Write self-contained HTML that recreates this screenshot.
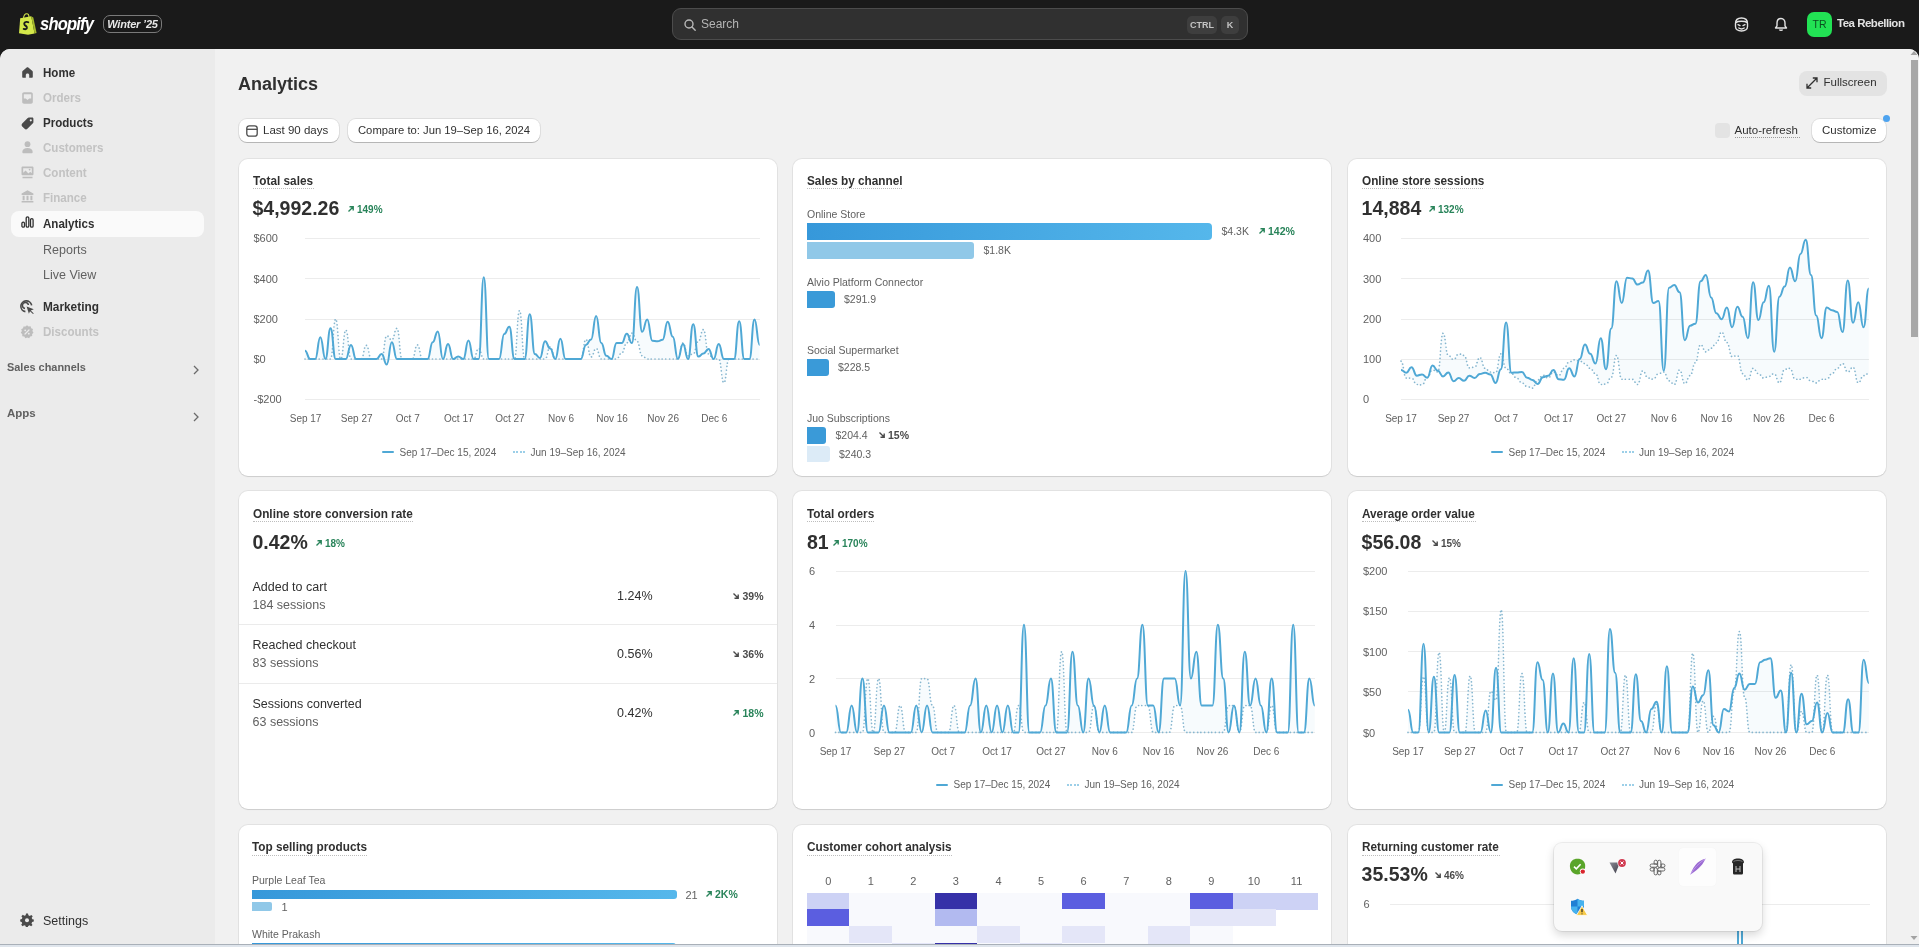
<!DOCTYPE html>
<html><head><meta charset="utf-8">
<style>
*{box-sizing:border-box;margin:0;padding:0}
html,body{width:1919px;height:947px;overflow:hidden;background:#1a1a1a;font-family:"Liberation Sans",sans-serif;color:#303030}
.abs{position:absolute}
#top{will-change:transform;position:absolute;left:0;top:0;width:1919px;height:49px;background:#1a1a1a}
#frame{will-change:transform;position:absolute;left:0;top:49px;width:1919px;height:895px;background:#f1f1f1;border-radius:10px 10px 0 0;overflow:hidden}
#side{position:absolute;left:0;top:0;width:215px;height:895px;background:#ebebeb}
#taskbar{position:absolute;left:0;top:944px;width:1919px;height:3px;background:#dfe5ec;border-top:1px solid #a9b0b8}
.nav{position:absolute;left:43px;font-size:13px;font-weight:bold;color:#303030;line-height:16px;white-space:nowrap;transform:scaleX(.89);transform-origin:0 0}
.nav.dis{color:#c2c2c2}
.nav.sub{font-weight:normal;color:#616161;transform:none}
.nico{position:absolute;left:20px;width:14px;height:14px}
.card{position:absolute;background:#fff;border-radius:9px;box-shadow:0 0 0 1px rgba(0,0,0,0.06),0 1px 1px rgba(0,0,0,0.10)}
.ctitle{position:absolute;left:14px;top:15px;font-size:13px;font-weight:bold;color:#303030;line-height:16px;white-space:nowrap;border-bottom:1px dotted #c9c9c9;padding-bottom:1px}
.big{position:absolute;left:14px;font-size:19px;font-weight:bold;color:#303030;line-height:22px;white-space:nowrap}
.chg{font-size:11px;font-weight:bold;color:#29845a;margin-left:6px;vertical-align:2px}
.chg.dn{color:#4a4a4a}
.t{position:absolute;white-space:nowrap;line-height:14px}
.btn{position:absolute;background:#fff;border-radius:8px;box-shadow:0 0 0 1px rgba(0,0,0,0.08),0 1px 0 rgba(0,0,0,0.18);font-size:12px;color:#303030;line-height:24px;white-space:nowrap}
svg{position:absolute;overflow:visible}
#content{will-change:transform}
</style></head><body>
<div id="top">
  <!-- shopify bag -->
  <svg style="left:18px;top:13px" width="19" height="22" viewBox="0 0 19 22">
    <path d="M2.2 5.2 L13.2 3.3 L16.6 20.4 L10 21.8 L1 20.2 Z" fill="#d4e84a"/>
    <path d="M13.2 3.3 L15.3 4.4 L18.6 19.9 L16.6 20.4 Z" fill="#a3b82a"/>
    <path d="M5.5 6 C5.6 2.2 7.3 0.8 8.8 0.8 C10.4 0.8 11 2.6 11 4.6" fill="none" stroke="#d4e84a" stroke-width="1.1"/>
    <path d="M10.3 9.3 C9.7 8.9 8.9 8.8 8.2 8.9 C6.5 9.1 5.7 10.6 6.6 11.8 C7.4 12.8 9.1 13.2 8.9 14.9 C8.7 16.3 7.1 16.6 5.7 15.9" fill="none" stroke="#1a1a1a" stroke-width="1.9" stroke-linecap="round"/>
  </svg>
  <div class="abs" style="left:40px;top:12px;font-size:18px;font-weight:bold;font-style:italic;color:#fff;letter-spacing:-0.9px;line-height:24px;transform:scaleX(.92);transform-origin:0 0">shopify</div>
  <div class="abs" style="left:103px;top:15px;width:59px;height:18px;border:1px solid #7a7a7a;border-radius:7px;font-size:11px;font-weight:bold;font-style:italic;color:#e8e8e8;line-height:16px;text-align:center;letter-spacing:-0.2px">Winter ’25</div>
  <!-- search -->
  <div class="abs" style="left:672px;top:8px;width:576px;height:32px;background:#303030;border:1px solid #4c4c4c;border-radius:9px">
    <svg style="left:11px;top:10px" width="12" height="12" viewBox="0 0 12 12"><circle cx="5" cy="5" r="4" fill="none" stroke="#b8b8b8" stroke-width="1.4"/><path d="M8 8 L11.2 11.2" stroke="#b8b8b8" stroke-width="1.4" stroke-linecap="round"/></svg>
    <div class="abs" style="left:28px;top:7px;font-size:12px;color:#b5b5b5;line-height:16px">Search</div>
    <div class="abs" style="left:514px;top:7px;width:30px;height:18px;background:#3e3e3e;border-radius:5px;font-size:9px;font-weight:bold;color:#c4c4c4;line-height:18px;text-align:center">CTRL</div>
    <div class="abs" style="left:548px;top:7px;width:18px;height:18px;background:#3e3e3e;border-radius:5px;font-size:9px;font-weight:bold;color:#c4c4c4;line-height:18px;text-align:center">K</div>
  </div>
  <!-- right icons -->
  <svg style="left:1734px;top:17px" width="15" height="15" viewBox="0 0 15 15">
    <path d="M7.5 1 C11.2 1 13.5 2.8 13.5 6.5 V9.5 C13.5 12.3 11.3 14 7.5 14 C3.7 14 1.5 12.3 1.5 9.5 V6.5 C1.5 2.8 3.8 1 7.5 1 Z" fill="none" stroke="#e3e3e3" stroke-width="1.4"/>
    <path d="M1.8 5.5 C4 3.8 11 3.8 13.2 5.5" fill="none" stroke="#e3e3e3" stroke-width="1.6"/>
    <path d="M4 7.6 L6 8.6 M11 7.6 L9 8.6 M4.8 11 C6.2 12 8.8 12 10.2 11" fill="none" stroke="#e3e3e3" stroke-width="1.3" stroke-linecap="round"/>
  </svg>
  <svg style="left:1774px;top:17px" width="14" height="15" viewBox="0 0 14 15">
    <path d="M7 1.5 C4.3 1.5 3 3.6 3 6 V8.8 L1.5 11 H12.5 L11 8.8 V6 C11 3.6 9.7 1.5 7 1.5 Z" fill="none" stroke="#e3e3e3" stroke-width="1.4" stroke-linejoin="round"/>
    <path d="M5.5 12.5 C5.8 13.6 8.2 13.6 8.5 12.5" fill="none" stroke="#e3e3e3" stroke-width="1.4"/>
  </svg>
  <div class="abs" style="left:1807px;top:12px;width:25px;height:25px;background:#22e254;border-radius:7px;font-size:10.5px;color:#0b4f1f;line-height:25px;text-align:center">TR</div>
  <div class="abs" style="left:1837px;top:16px;font-size:11.5px;font-weight:bold;color:#e3e3e3;line-height:14px;letter-spacing:-0.5px">Tea Rebellion</div>
</div>
<div id="frame"><div id="side">
  <div class="abs" style="left:11px;top:162px;width:193px;height:26px;background:#fafafa;border-radius:8px"></div>
  <!-- icons -->
  <svg style="left:22px;top:18px" width="11" height="11" viewBox="0 0 11 11"><path d="M5.5 0.2 C5.8 0.2 6.1 0.3 6.3 0.5 L10.4 4 C10.7 4.3 10.8 4.7 10.8 5.1 V9.8 C10.8 10.4 10.4 10.8 9.8 10.8 H7.2 V8 C7.2 7.1 6.5 6.4 5.5 6.4 C4.5 6.4 3.8 7.1 3.8 8 V10.8 H1.2 C0.6 10.8 0.2 10.4 0.2 9.8 V5.1 C0.2 4.7 0.3 4.3 0.6 4 L4.7 0.5 C4.9 0.3 5.2 0.2 5.5 0.2 Z" fill="#4a4a4a"/></svg>
  <svg style="left:22px;top:43px" width="11" height="12" viewBox="0 0 11 12"><path d="M2 0.3 H9 C10 0.3 10.8 1.1 10.8 2.1 V10 C10.8 11 10 11.7 9 11.7 H2 C1 11.7 0.2 11 0.2 10 V2.1 C0.2 1.1 1 0.3 2 0.3 Z M1.8 2.2 V6.6 H3.8 L5.5 8 L7.2 6.6 H9.2 V2.2 Z" fill="#bdbdbd" fill-rule="evenodd"/></svg>
  <svg style="left:21px;top:68px" width="13" height="13" viewBox="0 0 13 13"><path d="M7.8 0.6 H11.2 C11.9 0.6 12.4 1.1 12.4 1.8 V5.2 C12.4 5.6 12.2 6 11.9 6.3 L6.4 11.8 C5.6 12.6 4.4 12.6 3.6 11.8 L1.2 9.4 C0.4 8.6 0.4 7.4 1.2 6.6 L6.7 1.1 C7 0.8 7.4 0.6 7.8 0.6 Z M9.8 2.2 A1.1 1.1 0 1 0 9.8 4.4 A1.1 1.1 0 1 0 9.8 2.2 Z" fill="#4a4a4a" fill-rule="evenodd"/></svg>
  <svg style="left:22px;top:92px" width="11" height="13" viewBox="0 0 11 13"><circle cx="5.5" cy="3.2" r="2.9" fill="#bdbdbd"/><path d="M0.3 11 C0.3 8.4 2.6 7 5.5 7 C8.4 7 10.7 8.4 10.7 11 C10.7 11.8 10.2 12.3 9.4 12.3 H1.6 C0.8 12.3 0.3 11.8 0.3 11 Z" fill="#bdbdbd"/></svg>
  <svg style="left:21px;top:117px" width="13" height="13" viewBox="0 0 13 13"><path d="M1.8 0.5 H11.2 C12 0.5 12.5 1 12.5 1.8 V8 C12.5 8.8 12 9.3 11.2 9.3 H1.8 C1 9.3 0.5 8.8 0.5 8 V1.8 C0.5 1 1 0.5 1.8 0.5 Z M2.2 2.2 V6.8 L4.6 4.6 L7.4 7.4 L9.2 5.8 L10.8 7.2 V2.2 Z" fill="#bdbdbd" fill-rule="evenodd"/><circle cx="8.6" cy="3.6" r="0.9" fill="#bdbdbd"/><path d="M1.5 11.5 H11.5" stroke="#bdbdbd" stroke-width="1.3"/></svg>
  <svg style="left:21px;top:141px" width="13" height="13" viewBox="0 0 13 13"><path d="M6.5 0.3 L12.4 3.5 V4.9 H0.6 V3.5 Z M1.6 5.8 H3.6 V10.2 H1.6 Z M5.5 5.8 H7.5 V10.2 H5.5 Z M9.4 5.8 H11.4 V10.2 H9.4 Z M0.6 11 H12.4 V12.6 H0.6 Z" fill="#bdbdbd"/></svg>
  <svg style="left:21px;top:167px" width="13" height="12" viewBox="0 0 13 12"><rect x="0.9" y="6.2" width="2.6" height="5" rx="1.3" fill="none" stroke="#303030" stroke-width="1.3"/><rect x="5.2" y="0.8" width="2.6" height="10.4" rx="1.3" fill="none" stroke="#303030" stroke-width="1.3"/><rect x="9.5" y="2.6" width="2.6" height="8.6" rx="1.3" fill="none" stroke="#303030" stroke-width="1.3"/></svg>
  <svg style="left:20px;top:251px" width="15" height="14" viewBox="0 0 15 14"><path d="M11.6 5.4 A5.4 5.4 0 1 0 5.4 11.6" fill="none" stroke="#4a4a4a" stroke-width="1.6"/><path d="M8.4 5 A3 3 0 1 0 5 8.4" fill="none" stroke="#4a4a4a" stroke-width="1.5"/><path d="M6.6 6.6 L13.8 9.3 L10.8 10.5 L13.8 13.5 L13 14 L10 11.3 L8.9 13.8 Z" fill="#4a4a4a"/></svg>
  <svg style="left:20px;top:276px" width="14" height="14" viewBox="0 0 14 14"><path d="M7 0.3 L8.6 1.6 L10.6 1.3 L11.2 3.2 L13 4.1 L12.4 6 L13.5 7.7 L12.1 9.1 L12.2 11.1 L10.2 11.4 L9.2 13.2 L7.3 12.5 L5.4 13.3 L4.3 11.5 L2.3 11.2 L2.3 9.2 L0.8 7.8 L1.9 6.1 L1.2 4.2 L3 3.3 L3.5 1.4 L5.5 1.6 Z" fill="#bdbdbd"/><path d="M5 9 L9 5" stroke="#ebebeb" stroke-width="1.2" stroke-linecap="round"/><circle cx="5.2" cy="5.3" r="0.9" fill="#ebebeb"/><circle cx="8.8" cy="8.7" r="0.9" fill="#ebebeb"/></svg>
  <div class="nav" style="top:16px">Home</div>
  <div class="nav dis" style="top:41px">Orders</div>
  <div class="nav" style="top:66px">Products</div>
  <div class="nav dis" style="top:91px">Customers</div>
  <div class="nav dis" style="top:116px">Content</div>
  <div class="nav dis" style="top:141px">Finance</div>
  <div class="nav" style="top:167px">Analytics</div>
  <div class="nav sub" style="top:192.5px;font-size:12.5px">Reports</div>
  <div class="nav sub" style="top:217.5px;font-size:12.5px">Live View</div>
  <div class="nav" style="top:250px;transform:scaleX(.91)">Marketing</div>
  <div class="nav dis" style="top:275px">Discounts</div>
  <div class="abs" style="left:7px;top:311px;font-size:11.5px;font-weight:bold;color:#616161;line-height:14px;transform:scaleX(.95);transform-origin:0 0">Sales channels</div>
  <svg style="left:192px;top:316px" width="8" height="10" viewBox="0 0 8 10"><path d="M2 1 L6 5 L2 9" fill="none" stroke="#6b6b6b" stroke-width="1.3"/></svg>
  <div class="abs" style="left:7px;top:357px;font-size:11.5px;font-weight:bold;color:#616161;line-height:14px">Apps</div>
  <svg style="left:192px;top:363px" width="8" height="10" viewBox="0 0 8 10"><path d="M2 1 L6 5 L2 9" fill="none" stroke="#6b6b6b" stroke-width="1.3"/></svg>
  <svg style="left:20px;top:864px" width="14" height="14" viewBox="0 0 14 14"><path d="M6 0.5 H8 L8.4 2.3 L9.8 2.9 L11.3 1.9 L12.7 3.3 L11.7 4.8 L12.3 6.2 L13.8 6.6 V8.6 L12.1 9 L11.5 10.4 L12.5 11.9 L11.1 13.3 L9.6 12.3 L8.2 12.9 L7.8 14 H5.8 L5.5 12.8 L4.1 12.2 L2.6 13.2 L1.2 11.8 L2.2 10.3 L1.6 8.9 L0.2 8.5 V6.5 L1.8 6.1 L2.4 4.7 L1.4 3.2 L2.8 1.8 L4.3 2.8 L5.7 2.2 Z" fill="#4a4a4a"/><circle cx="7" cy="7.3" r="2" fill="#ebebeb"/></svg>
  <div class="nav" style="top:864px;font-weight:normal;color:#303030;font-size:12.5px;transform:none">Settings</div>
</div>
</div>
<div id="content" style="position:absolute;left:0;top:0;width:1919px;height:944px;overflow:hidden">
<div class="t" style="left:238px;top:72.76px;font-size:18px;line-height:22px;font-weight:bold;color:#303030;">Analytics</div>
<div class="abs" style="left:1799px;top:71px;width:88px;height:25px;background:#e3e3e3;border-radius:8px"></div>
<svg style="left:1806px;top:77px" width="12" height="12" viewBox="0 0 12 12"><path d="M1 11 L11 1 M6.8 1 H11 V5.2 M1 6.8 V11 H5.2" fill="none" stroke="#303030" stroke-width="1.3"/></svg>
<div class="t" style="left:1823.5px;top:75.22px;font-size:11.5px;line-height:14px;font-weight:normal;color:#303030;">Fullscreen</div>
<div class="btn" style="left:239px;top:119px;width:100px;height:23px"></div>
<svg style="left:246px;top:125px" width="12" height="12" viewBox="0 0 12 12"><rect x="0.8" y="0.8" width="10.4" height="10.4" rx="2.5" fill="none" stroke="#4a4a4a" stroke-width="1.3"/><path d="M0.8 4.3 H11.2" stroke="#4a4a4a" stroke-width="1.3"/></svg>
<div class="t" style="left:263px;top:123.02px;font-size:11.5px;line-height:14px;font-weight:normal;color:#303030;">Last 90 days</div>
<div class="btn" style="left:348px;top:119px;width:192px;height:23px"></div>
<div class="t" style="left:358px;top:123.1px;font-size:11.25px;line-height:14px;font-weight:normal;color:#303030;">Compare to: Jun 19–Sep 16, 2024</div>
<div class="abs" style="left:1715px;top:123px;width:15px;height:15px;background:#e3e3e3;border-radius:4px"></div>
<div class="t" style="left:1734.5px;top:123.32px;font-size:11.5px;line-height:14px;font-weight:normal;color:#303030;">Auto-refresh</div>
<div class="abs" style="left:1735px;top:137px;width:65px;height:0;border-top:1px dotted #9a9a9a"></div>
<div class="btn" style="left:1812px;top:119px;width:74px;height:23px"></div>
<div class="t" style="left:1822px;top:123.32px;font-size:11.5px;line-height:14px;font-weight:normal;color:#303030;">Customize</div>
<div class="abs" style="left:1883px;top:115px;width:7px;height:7px;background:#4da3ef;border-radius:50%"></div>
<div class="card" style="left:239px;top:159px;width:538px;height:317px"></div>
<div class="card" style="left:793px;top:159px;width:538px;height:317px"></div>
<div class="card" style="left:1348px;top:159px;width:538px;height:317px"></div>
<div class="card" style="left:239px;top:491px;width:538px;height:318px"></div>
<div class="card" style="left:793px;top:491px;width:538px;height:318px"></div>
<div class="card" style="left:1348px;top:491px;width:538px;height:318px"></div>
<div class="card" style="left:239px;top:825px;width:538px;height:200px"></div>
<div class="card" style="left:793px;top:825px;width:538px;height:200px"></div>
<div class="card" style="left:1348px;top:825px;width:538px;height:200px"></div>
<div class="t" style="left:252.5px;top:172.5px;font-size:13px;line-height:16px;font-weight:bold;color:#303030;transform:scaleX(0.906);transform-origin:0 0;">Total sales</div>
<div class="abs" style="left:252.5px;top:188px;width:61px;height:0;border-top:1px dotted #bdbdbd"></div>
<div class="t" style="left:252.5px;top:195.84px;font-size:19.5px;line-height:24px;font-weight:bold;color:#303030;">$4,992.26</div>
<div class="t" style="left:347px;top:203.53px;font-size:10px;line-height:12px;font-weight:bold;color:#29845a;"><svg width="8" height="8" viewBox="0 0 8 8" style="position:relative;display:inline-block;vertical-align:0px;margin-right:2px"><path d="M1.5 6.5 L6 2 M2.5 1.8 H6.2 V5.5" fill="none" stroke="#29845a" stroke-width="1.4"/></svg>149%</div>
<div class="t" style="left:253.5px;top:231.39px;font-size:11px;line-height:14px;font-weight:normal;color:#616161;">$600</div>
<div class="t" style="left:253.5px;top:271.79px;font-size:11px;line-height:14px;font-weight:normal;color:#616161;">$400</div>
<div class="t" style="left:253.5px;top:312.19px;font-size:11px;line-height:14px;font-weight:normal;color:#616161;">$200</div>
<div class="t" style="left:253.5px;top:352.19px;font-size:11px;line-height:14px;font-weight:normal;color:#616161;">$0</div>
<div class="t" style="left:253.5px;top:392.19px;font-size:11px;line-height:14px;font-weight:normal;color:#616161;">-$200</div>
<div class="abs" style="left:305px;top:237.7px;width:455px;height:1px;background:#ececec"></div>
<div class="abs" style="left:305px;top:278.1px;width:455px;height:1px;background:#ececec"></div>
<div class="abs" style="left:305px;top:318.5px;width:455px;height:1px;background:#ececec"></div>
<div class="abs" style="left:305px;top:358.5px;width:455px;height:1px;background:#ececec"></div>
<div class="abs" style="left:305px;top:398.5px;width:455px;height:1px;background:#ececec"></div>
<svg style="left:0;top:0" width="1919" height="947"><path d="M305 350.74C307.55 350.74 307.55 359 310.11 359C312.66 359 312.66 359 315.22 359C317.77 359 317.77 337.24 320.32 337.24C322.88 337.24 322.88 359 325.43 359C327.99 359 327.99 328.37 330.54 328.37C333.09 328.37 333.09 359 335.65 359C338.2 359 338.2 359 340.76 359C343.31 359 343.31 359 345.86 359C348.42 359 348.42 344.89 350.97 344.89C353.53 344.89 353.53 359 356.08 359C358.63 359 358.63 359 361.19 359C363.74 359 363.74 359 366.3 359C368.85 359 368.85 359 371.4 359C373.96 359 373.96 359 376.51 359C379.07 359 379.07 353.96 381.62 353.96C384.17 353.96 384.17 364.44 386.73 364.44C389.28 364.44 389.28 342.28 391.84 342.28C394.39 342.28 394.39 359 396.94 359C399.5 359 399.5 359 402.05 359C404.61 359 404.61 359 407.16 359C409.71 359 409.71 359 412.27 359C414.82 359 414.82 359 417.38 359C419.93 359 419.93 359 422.48 359C425.04 359 425.04 359 427.59 359C430.15 359 430.15 342.28 432.7 342.28C435.25 342.28 435.25 331.39 437.81 331.39C440.36 331.39 440.36 359 442.92 359C445.47 359 445.47 344.09 448.02 344.09C450.58 344.09 450.58 359 453.13 359C455.69 359 455.69 356.38 458.24 356.38C460.79 356.38 460.79 359 463.35 359C465.9 359 465.9 340.46 468.46 340.46C471.01 340.46 471.01 359 473.56 359C476.12 359 476.12 359 478.67 359C481.23 359 481.23 277.19 483.78 277.19C486.33 277.19 486.33 359 488.89 359C491.44 359 491.44 359 494 359C496.55 359 496.55 359 499.1 359C501.66 359 501.66 334.01 504.21 334.01C506.77 334.01 506.77 326.76 509.32 326.76C511.87 326.76 511.87 359 514.43 359C516.98 359 516.98 359 519.54 359C522.09 359 522.09 359 524.64 359C527.2 359 527.2 314.27 529.75 314.27C532.31 314.27 532.31 353.96 534.86 353.96C537.41 353.96 537.41 357.99 539.97 357.99C542.52 357.99 542.52 341.27 545.08 341.27C547.63 341.27 547.63 348.52 550.18 348.52C552.74 348.52 552.74 359 555.29 359C557.85 359 557.85 338.65 560.4 338.65C562.95 338.65 562.95 359 565.51 359C568.06 359 568.06 359 570.62 359C573.17 359 573.17 359 575.72 359C578.28 359 578.28 359 580.83 359C583.39 359 583.39 344.89 585.94 344.89C588.49 344.89 588.49 339.45 591.05 339.45C593.6 339.45 593.6 316.08 596.16 316.08C598.71 316.08 598.71 343.08 601.26 343.08C603.82 343.08 603.82 355.78 606.37 355.78C608.93 355.78 608.93 359 611.48 359C614.03 359 614.03 343.08 616.59 343.08C619.14 343.08 619.14 343.08 621.7 343.08C624.25 343.08 624.25 333.81 626.8 333.81C629.36 333.81 629.36 343.08 631.91 343.08C634.47 343.08 634.47 287.06 637.02 287.06C639.57 287.06 639.57 331.8 642.13 331.8C644.68 331.8 644.68 319.51 647.24 319.51C649.79 319.51 649.79 340.87 652.34 340.87C654.9 340.87 654.9 341.27 657.45 341.27C660.01 341.27 660.01 339.86 662.56 339.86C665.11 339.86 665.11 321.72 667.67 321.72C670.22 321.72 670.22 336.83 672.78 336.83C675.33 336.83 675.33 359 677.88 359C680.44 359 680.44 344.09 682.99 344.09C685.55 344.09 685.55 359 688.1 359C690.65 359 690.65 324.14 693.21 324.14C695.76 324.14 695.76 356.58 698.32 356.58C700.87 356.58 700.87 353.56 703.42 353.56C705.98 353.56 705.98 348.93 708.53 348.93C711.09 348.93 711.09 359 713.64 359C716.19 359 716.19 344.09 718.75 344.09C721.3 344.09 721.3 359 723.86 359C726.41 359 726.41 359 728.96 359C731.52 359 731.52 359 734.07 359C736.63 359 736.63 321.32 739.18 321.32C741.73 321.32 741.73 359 744.29 359C746.84 359 746.84 359 749.4 359C751.95 359 751.95 319.51 754.5 319.51C757.06 319.51 757.06 344.89 759.61 344.89L759.61 359C757.06 359 757.06 359 754.5 359C751.95 359 751.95 359 749.4 359C746.84 359 746.84 359 744.29 359C741.73 359 741.73 359 739.18 359C736.63 359 736.63 359 734.07 359C731.52 359 731.52 359 728.96 359C726.41 359 726.41 382.78 723.86 382.78C721.3 382.78 721.3 359 718.75 359C716.19 359 716.19 359 713.64 359C711.09 359 711.09 353.96 708.53 353.96C705.98 353.96 705.98 329.58 703.42 329.58C700.87 329.58 700.87 341.27 698.32 341.27C695.76 341.27 695.76 353.96 693.21 353.96C690.65 353.96 690.65 355.78 688.1 355.78C685.55 355.78 685.55 343.08 682.99 343.08C680.44 343.08 680.44 359 677.88 359C675.33 359 675.33 359 672.78 359C670.22 359 670.22 359 667.67 359C665.11 359 665.11 359 662.56 359C660.01 359 660.01 359 657.45 359C654.9 359 654.9 359 652.34 359C649.79 359 649.79 359 647.24 359C644.68 359 644.68 355.78 642.13 355.78C639.57 355.78 639.57 341.27 637.02 341.27C634.47 341.27 634.47 333.21 631.91 333.21C629.36 333.21 629.36 342.88 626.8 342.88C624.25 342.88 624.25 352.95 621.7 352.95C619.14 352.95 619.14 359 616.59 359C614.03 359 614.03 359 611.48 359C608.93 359 608.93 359 606.37 359C603.82 359 603.82 359 601.26 359C598.71 359 598.71 348.52 596.16 348.52C593.6 348.52 593.6 356.99 591.05 356.99C588.49 356.99 588.49 339.45 585.94 339.45C583.39 339.45 583.39 359 580.83 359C578.28 359 578.28 359 575.72 359C573.17 359 573.17 359 570.62 359C568.06 359 568.06 359 565.51 359C562.95 359 562.95 359 560.4 359C557.85 359 557.85 359 555.29 359C552.74 359 552.74 346.91 550.18 346.91C547.63 346.91 547.63 359 545.08 359C542.52 359 542.52 359 539.97 359C537.41 359 537.41 359 534.86 359C532.31 359 532.31 359 529.75 359C527.2 359 527.2 359 524.64 359C522.09 359 522.09 310.64 519.54 310.64C516.98 310.64 516.98 359 514.43 359C511.87 359 511.87 359 509.32 359C506.77 359 506.77 359 504.21 359C501.66 359 501.66 359 499.1 359C496.55 359 496.55 359 494 359C491.44 359 491.44 359 488.89 359C486.33 359 486.33 359 483.78 359C481.23 359 481.23 348.52 478.67 348.52C476.12 348.52 476.12 359 473.56 359C471.01 359 471.01 359 468.46 359C465.9 359 465.9 359 463.35 359C460.79 359 460.79 359 458.24 359C455.69 359 455.69 359 453.13 359C450.58 359 450.58 359 448.02 359C445.47 359 445.47 359 442.92 359C440.36 359 440.36 359 437.81 359C435.25 359 435.25 359 432.7 359C430.15 359 430.15 359 427.59 359C425.04 359 425.04 359 422.48 359C419.93 359 419.93 344.89 417.38 344.89C414.82 344.89 414.82 359 412.27 359C409.71 359 409.71 359 407.16 359C404.61 359 404.61 359 402.05 359C399.5 359 399.5 328.37 396.94 328.37C394.39 328.37 394.39 339.86 391.84 339.86C389.28 339.86 389.28 335.83 386.73 335.83C384.17 335.83 384.17 359 381.62 359C379.07 359 379.07 359 376.51 359C373.96 359 373.96 359 371.4 359C368.85 359 368.85 345.3 366.3 345.3C363.74 345.3 363.74 359 361.19 359C358.63 359 358.63 359 356.08 359C353.53 359 353.53 359 350.97 359C348.42 359 348.42 330.19 345.86 330.19C343.31 330.19 343.31 359 340.76 359C338.2 359 338.2 319.1 335.65 319.1C333.09 319.1 333.09 359 330.54 359C327.99 359 327.99 359 325.43 359C322.88 359 322.88 359 320.32 359C317.77 359 317.77 359 315.22 359C312.66 359 312.66 359 310.11 359C307.55 359 307.55 359 305 359Z" fill="rgba(79,168,213,0.045)" stroke="none"/><path d="M305 359C307.55 359 307.55 359 310.11 359C312.66 359 312.66 359 315.22 359C317.77 359 317.77 359 320.32 359C322.88 359 322.88 359 325.43 359C327.99 359 327.99 359 330.54 359C333.09 359 333.09 319.1 335.65 319.1C338.2 319.1 338.2 359 340.76 359C343.31 359 343.31 330.19 345.86 330.19C348.42 330.19 348.42 359 350.97 359C353.53 359 353.53 359 356.08 359C358.63 359 358.63 359 361.19 359C363.74 359 363.74 345.3 366.3 345.3C368.85 345.3 368.85 359 371.4 359C373.96 359 373.96 359 376.51 359C379.07 359 379.07 359 381.62 359C384.17 359 384.17 335.83 386.73 335.83C389.28 335.83 389.28 339.86 391.84 339.86C394.39 339.86 394.39 328.37 396.94 328.37C399.5 328.37 399.5 359 402.05 359C404.61 359 404.61 359 407.16 359C409.71 359 409.71 359 412.27 359C414.82 359 414.82 344.89 417.38 344.89C419.93 344.89 419.93 359 422.48 359C425.04 359 425.04 359 427.59 359C430.15 359 430.15 359 432.7 359C435.25 359 435.25 359 437.81 359C440.36 359 440.36 359 442.92 359C445.47 359 445.47 359 448.02 359C450.58 359 450.58 359 453.13 359C455.69 359 455.69 359 458.24 359C460.79 359 460.79 359 463.35 359C465.9 359 465.9 359 468.46 359C471.01 359 471.01 359 473.56 359C476.12 359 476.12 348.52 478.67 348.52C481.23 348.52 481.23 359 483.78 359C486.33 359 486.33 359 488.89 359C491.44 359 491.44 359 494 359C496.55 359 496.55 359 499.1 359C501.66 359 501.66 359 504.21 359C506.77 359 506.77 359 509.32 359C511.87 359 511.87 359 514.43 359C516.98 359 516.98 310.64 519.54 310.64C522.09 310.64 522.09 359 524.64 359C527.2 359 527.2 359 529.75 359C532.31 359 532.31 359 534.86 359C537.41 359 537.41 359 539.97 359C542.52 359 542.52 359 545.08 359C547.63 359 547.63 346.91 550.18 346.91C552.74 346.91 552.74 359 555.29 359C557.85 359 557.85 359 560.4 359C562.95 359 562.95 359 565.51 359C568.06 359 568.06 359 570.62 359C573.17 359 573.17 359 575.72 359C578.28 359 578.28 359 580.83 359C583.39 359 583.39 339.45 585.94 339.45C588.49 339.45 588.49 356.99 591.05 356.99C593.6 356.99 593.6 348.52 596.16 348.52C598.71 348.52 598.71 359 601.26 359C603.82 359 603.82 359 606.37 359C608.93 359 608.93 359 611.48 359C614.03 359 614.03 359 616.59 359C619.14 359 619.14 352.95 621.7 352.95C624.25 352.95 624.25 342.88 626.8 342.88C629.36 342.88 629.36 333.21 631.91 333.21C634.47 333.21 634.47 341.27 637.02 341.27C639.57 341.27 639.57 355.78 642.13 355.78C644.68 355.78 644.68 359 647.24 359C649.79 359 649.79 359 652.34 359C654.9 359 654.9 359 657.45 359C660.01 359 660.01 359 662.56 359C665.11 359 665.11 359 667.67 359C670.22 359 670.22 359 672.78 359C675.33 359 675.33 359 677.88 359C680.44 359 680.44 343.08 682.99 343.08C685.55 343.08 685.55 355.78 688.1 355.78C690.65 355.78 690.65 353.96 693.21 353.96C695.76 353.96 695.76 341.27 698.32 341.27C700.87 341.27 700.87 329.58 703.42 329.58C705.98 329.58 705.98 353.96 708.53 353.96C711.09 353.96 711.09 359 713.64 359C716.19 359 716.19 359 718.75 359C721.3 359 721.3 382.78 723.86 382.78C726.41 382.78 726.41 359 728.96 359C731.52 359 731.52 359 734.07 359C736.63 359 736.63 359 739.18 359C741.73 359 741.73 359 744.29 359C746.84 359 746.84 359 749.4 359C751.95 359 751.95 359 754.5 359C757.06 359 757.06 359 759.61 359" fill="none" stroke="#86b6cf" stroke-width="1.7" stroke-dasharray="0.01 3.6" stroke-linecap="round"/><path d="M305 350.74C307.55 350.74 307.55 359 310.11 359C312.66 359 312.66 359 315.22 359C317.77 359 317.77 337.24 320.32 337.24C322.88 337.24 322.88 359 325.43 359C327.99 359 327.99 328.37 330.54 328.37C333.09 328.37 333.09 359 335.65 359C338.2 359 338.2 359 340.76 359C343.31 359 343.31 359 345.86 359C348.42 359 348.42 344.89 350.97 344.89C353.53 344.89 353.53 359 356.08 359C358.63 359 358.63 359 361.19 359C363.74 359 363.74 359 366.3 359C368.85 359 368.85 359 371.4 359C373.96 359 373.96 359 376.51 359C379.07 359 379.07 353.96 381.62 353.96C384.17 353.96 384.17 364.44 386.73 364.44C389.28 364.44 389.28 342.28 391.84 342.28C394.39 342.28 394.39 359 396.94 359C399.5 359 399.5 359 402.05 359C404.61 359 404.61 359 407.16 359C409.71 359 409.71 359 412.27 359C414.82 359 414.82 359 417.38 359C419.93 359 419.93 359 422.48 359C425.04 359 425.04 359 427.59 359C430.15 359 430.15 342.28 432.7 342.28C435.25 342.28 435.25 331.39 437.81 331.39C440.36 331.39 440.36 359 442.92 359C445.47 359 445.47 344.09 448.02 344.09C450.58 344.09 450.58 359 453.13 359C455.69 359 455.69 356.38 458.24 356.38C460.79 356.38 460.79 359 463.35 359C465.9 359 465.9 340.46 468.46 340.46C471.01 340.46 471.01 359 473.56 359C476.12 359 476.12 359 478.67 359C481.23 359 481.23 277.19 483.78 277.19C486.33 277.19 486.33 359 488.89 359C491.44 359 491.44 359 494 359C496.55 359 496.55 359 499.1 359C501.66 359 501.66 334.01 504.21 334.01C506.77 334.01 506.77 326.76 509.32 326.76C511.87 326.76 511.87 359 514.43 359C516.98 359 516.98 359 519.54 359C522.09 359 522.09 359 524.64 359C527.2 359 527.2 314.27 529.75 314.27C532.31 314.27 532.31 353.96 534.86 353.96C537.41 353.96 537.41 357.99 539.97 357.99C542.52 357.99 542.52 341.27 545.08 341.27C547.63 341.27 547.63 348.52 550.18 348.52C552.74 348.52 552.74 359 555.29 359C557.85 359 557.85 338.65 560.4 338.65C562.95 338.65 562.95 359 565.51 359C568.06 359 568.06 359 570.62 359C573.17 359 573.17 359 575.72 359C578.28 359 578.28 359 580.83 359C583.39 359 583.39 344.89 585.94 344.89C588.49 344.89 588.49 339.45 591.05 339.45C593.6 339.45 593.6 316.08 596.16 316.08C598.71 316.08 598.71 343.08 601.26 343.08C603.82 343.08 603.82 355.78 606.37 355.78C608.93 355.78 608.93 359 611.48 359C614.03 359 614.03 343.08 616.59 343.08C619.14 343.08 619.14 343.08 621.7 343.08C624.25 343.08 624.25 333.81 626.8 333.81C629.36 333.81 629.36 343.08 631.91 343.08C634.47 343.08 634.47 287.06 637.02 287.06C639.57 287.06 639.57 331.8 642.13 331.8C644.68 331.8 644.68 319.51 647.24 319.51C649.79 319.51 649.79 340.87 652.34 340.87C654.9 340.87 654.9 341.27 657.45 341.27C660.01 341.27 660.01 339.86 662.56 339.86C665.11 339.86 665.11 321.72 667.67 321.72C670.22 321.72 670.22 336.83 672.78 336.83C675.33 336.83 675.33 359 677.88 359C680.44 359 680.44 344.09 682.99 344.09C685.55 344.09 685.55 359 688.1 359C690.65 359 690.65 324.14 693.21 324.14C695.76 324.14 695.76 356.58 698.32 356.58C700.87 356.58 700.87 353.56 703.42 353.56C705.98 353.56 705.98 348.93 708.53 348.93C711.09 348.93 711.09 359 713.64 359C716.19 359 716.19 344.09 718.75 344.09C721.3 344.09 721.3 359 723.86 359C726.41 359 726.41 359 728.96 359C731.52 359 731.52 359 734.07 359C736.63 359 736.63 321.32 739.18 321.32C741.73 321.32 741.73 359 744.29 359C746.84 359 746.84 359 749.4 359C751.95 359 751.95 319.51 754.5 319.51C757.06 319.51 757.06 344.89 759.61 344.89" fill="none" stroke="#4fa8d5" stroke-width="2" stroke-linejoin="round"/></svg>
<div class="t" style="left:105.6px;width:400px;text-align:center;top:412.54px;font-size:10px;line-height:12px;font-weight:normal;color:#616161;">Sep 17</div>
<div class="t" style="left:156.68px;width:400px;text-align:center;top:412.54px;font-size:10px;line-height:12px;font-weight:normal;color:#616161;">Sep 27</div>
<div class="t" style="left:207.76px;width:400px;text-align:center;top:412.54px;font-size:10px;line-height:12px;font-weight:normal;color:#616161;">Oct 7</div>
<div class="t" style="left:258.84px;width:400px;text-align:center;top:412.54px;font-size:10px;line-height:12px;font-weight:normal;color:#616161;">Oct 17</div>
<div class="t" style="left:309.92px;width:400px;text-align:center;top:412.54px;font-size:10px;line-height:12px;font-weight:normal;color:#616161;">Oct 27</div>
<div class="t" style="left:361px;width:400px;text-align:center;top:412.54px;font-size:10px;line-height:12px;font-weight:normal;color:#616161;">Nov 6</div>
<div class="t" style="left:412.08px;width:400px;text-align:center;top:412.54px;font-size:10px;line-height:12px;font-weight:normal;color:#616161;">Nov 16</div>
<div class="t" style="left:463.16px;width:400px;text-align:center;top:412.54px;font-size:10px;line-height:12px;font-weight:normal;color:#616161;">Nov 26</div>
<div class="t" style="left:514.24px;width:400px;text-align:center;top:412.54px;font-size:10px;line-height:12px;font-weight:normal;color:#616161;">Dec 6</div>
<div class="abs" style="left:382px;top:451.4px;width:12px;height:2px;background:#4fa8d5;border-radius:1px"></div>
<div class="t" style="left:399.5px;top:446.54px;font-size:10px;line-height:12px;font-weight:normal;color:#616161;">Sep 17–Dec 15, 2024</div>
<div class="abs" style="left:513px;top:451.4px;width:12px;height:0;border-top:2px dotted #9ccfe8"></div>
<div class="t" style="left:530.5px;top:446.54px;font-size:10px;line-height:12px;font-weight:normal;color:#616161;">Jun 19–Sep 16, 2024</div>
<div class="t" style="left:807px;top:172.5px;font-size:13px;line-height:16px;font-weight:bold;color:#303030;transform:scaleX(0.906);transform-origin:0 0;">Sales by channel</div>
<div class="abs" style="left:807px;top:188px;width:95px;height:0;border-top:1px dotted #bdbdbd"></div>
<div class="t" style="left:807px;top:208.36px;font-size:10.5px;line-height:13px;font-weight:normal;color:#616161;">Online Store</div>
<div class="abs" style="left:807px;top:223px;width:405px;height:16.5px;border-radius:0 4px 4px 0;background:linear-gradient(90deg,#3698da,#55b7eb)"></div>
<div class="t" style="left:1221.5px;top:224.86px;font-size:10.5px;line-height:13px;font-weight:normal;color:#616161;">$4.3K</div>
<div class="t" style="left:1258px;top:224.86px;font-size:10.5px;line-height:13px;font-weight:bold;color:#29845a;"><svg width="8" height="8" viewBox="0 0 8 8" style="position:relative;display:inline-block;vertical-align:0px;margin-right:2px"><path d="M1.5 6.5 L6 2 M2.5 1.8 H6.2 V5.5" fill="none" stroke="#29845a" stroke-width="1.4"/></svg>142%</div>
<div class="abs" style="left:807px;top:242px;width:167px;height:16.5px;border-radius:0 3px 3px 0;background:#90c8e8"></div>
<div class="t" style="left:983.5px;top:243.86px;font-size:10.5px;line-height:13px;font-weight:normal;color:#616161;">$1.8K</div>
<div class="t" style="left:807px;top:276.36px;font-size:10.5px;line-height:13px;font-weight:normal;color:#616161;">Alvio Platform Connector</div>
<div class="abs" style="left:807px;top:291px;width:28px;height:16.5px;border-radius:0 3px 3px 0;background:#3a9ad8"></div>
<div class="t" style="left:844px;top:292.86px;font-size:10.5px;line-height:13px;font-weight:normal;color:#616161;">$291.9</div>
<div class="t" style="left:807px;top:344.36px;font-size:10.5px;line-height:13px;font-weight:normal;color:#616161;">Social Supermarket</div>
<div class="abs" style="left:807px;top:359px;width:22px;height:16.5px;border-radius:0 3px 3px 0;background:#3a9ad8"></div>
<div class="t" style="left:838px;top:360.86px;font-size:10.5px;line-height:13px;font-weight:normal;color:#616161;">$228.5</div>
<div class="t" style="left:807px;top:412.36px;font-size:10.5px;line-height:13px;font-weight:normal;color:#616161;">Juo Subscriptions</div>
<div class="abs" style="left:807px;top:427px;width:19px;height:16.5px;border-radius:0 3px 3px 0;background:#3a9ad8"></div>
<div class="t" style="left:835.5px;top:428.86px;font-size:10.5px;line-height:13px;font-weight:normal;color:#616161;">$204.4</div>
<div class="t" style="left:878px;top:428.86px;font-size:10.5px;line-height:13px;font-weight:bold;color:#4a4a4a;"><svg width="8" height="8" viewBox="0 0 8 8" style="position:relative;display:inline-block;vertical-align:0px;margin-right:2px"><path d="M1.5 1.5 L6 6 M6.2 2.5 V6.2 H2.5" fill="none" stroke="#4a4a4a" stroke-width="1.4"/></svg>15%</div>
<div class="abs" style="left:807px;top:446px;width:22.5px;height:16px;border-radius:0 3px 3px 0;background:#dcebf7"></div>
<div class="t" style="left:839px;top:447.86px;font-size:10.5px;line-height:13px;font-weight:normal;color:#616161;">$240.3</div>
<div class="t" style="left:1361.6px;top:172.5px;font-size:13px;line-height:16px;font-weight:bold;color:#303030;transform:scaleX(0.906);transform-origin:0 0;">Online store sessions</div>
<div class="abs" style="left:1361.6px;top:188px;width:121px;height:0;border-top:1px dotted #bdbdbd"></div>
<div class="t" style="left:1361.6px;top:195.84px;font-size:19.5px;line-height:24px;font-weight:bold;color:#303030;">14,884</div>
<div class="t" style="left:1428px;top:203.53px;font-size:10px;line-height:12px;font-weight:bold;color:#29845a;"><svg width="8" height="8" viewBox="0 0 8 8" style="position:relative;display:inline-block;vertical-align:0px;margin-right:2px"><path d="M1.5 6.5 L6 2 M2.5 1.8 H6.2 V5.5" fill="none" stroke="#29845a" stroke-width="1.4"/></svg>132%</div>
<div class="t" style="left:1363px;top:231.39px;font-size:11px;line-height:14px;font-weight:normal;color:#616161;">400</div>
<div class="t" style="left:1363px;top:271.79px;font-size:11px;line-height:14px;font-weight:normal;color:#616161;">300</div>
<div class="t" style="left:1363px;top:312.19px;font-size:11px;line-height:14px;font-weight:normal;color:#616161;">200</div>
<div class="t" style="left:1363px;top:352.19px;font-size:11px;line-height:14px;font-weight:normal;color:#616161;">100</div>
<div class="t" style="left:1363px;top:392.19px;font-size:11px;line-height:14px;font-weight:normal;color:#616161;">0</div>
<div class="abs" style="left:1401px;top:237.7px;width:468px;height:1px;background:#ececec"></div>
<div class="abs" style="left:1401px;top:278.1px;width:468px;height:1px;background:#ececec"></div>
<div class="abs" style="left:1401px;top:318.5px;width:468px;height:1px;background:#ececec"></div>
<div class="abs" style="left:1401px;top:358.5px;width:468px;height:1px;background:#ececec"></div>
<div class="abs" style="left:1401px;top:398.5px;width:468px;height:1px;background:#ececec"></div>
<svg style="left:0;top:0" width="1919" height="947"><path d="M1401 369.98C1403.63 369.98 1403.63 372.81 1406.26 372.81C1408.88 372.81 1408.88 367.16 1411.51 367.16C1414.14 367.16 1414.14 375.63 1416.77 375.63C1419.4 375.63 1419.4 374.42 1422.02 374.42C1424.65 374.42 1424.65 377.64 1427.28 377.64C1429.91 377.64 1429.91 365.55 1432.54 365.55C1435.16 365.55 1435.16 370.79 1437.79 370.79C1440.42 370.79 1440.42 376.43 1443.05 376.43C1445.68 376.43 1445.68 372.4 1448.3 372.4C1450.93 372.4 1450.93 381.27 1453.56 381.27C1456.19 381.27 1456.19 378.04 1458.82 378.04C1461.44 378.04 1461.44 380.87 1464.07 380.87C1466.7 380.87 1466.7 375.63 1469.33 375.63C1471.96 375.63 1471.96 378.04 1474.58 378.04C1477.21 378.04 1477.21 374.01 1479.84 374.01C1482.47 374.01 1482.47 372.81 1485.1 372.81C1487.72 372.81 1487.72 374.42 1490.35 374.42C1492.98 374.42 1492.98 382.88 1495.61 382.88C1498.24 382.88 1498.24 369.18 1500.86 369.18C1503.49 369.18 1503.49 322.43 1506.12 322.43C1508.75 322.43 1508.75 372.81 1511.38 372.81C1514 372.81 1514 372.4 1516.63 372.4C1519.26 372.4 1519.26 372 1521.89 372C1524.52 372 1524.52 377.64 1527.14 377.64C1529.77 377.64 1529.77 380.06 1532.4 380.06C1535.03 380.06 1535.03 384.09 1537.66 384.09C1540.28 384.09 1540.28 377.24 1542.91 377.24C1545.54 377.24 1545.54 375.63 1548.17 375.63C1550.8 375.63 1550.8 369.98 1553.42 369.98C1556.05 369.98 1556.05 379.25 1558.68 379.25C1561.31 379.25 1561.31 379.66 1563.94 379.66C1566.56 379.66 1566.56 368.37 1569.19 368.37C1571.82 368.37 1571.82 376.43 1574.45 376.43C1577.08 376.43 1577.08 359.1 1579.7 359.1C1582.33 359.1 1582.33 344.6 1584.96 344.6C1587.59 344.6 1587.59 353.86 1590.22 353.86C1592.84 353.86 1592.84 363.54 1595.47 363.54C1598.1 363.54 1598.1 338.15 1600.73 338.15C1603.36 338.15 1603.36 369.18 1605.98 369.18C1608.61 369.18 1608.61 328.48 1611.24 328.48C1613.87 328.48 1613.87 281.32 1616.5 281.32C1619.12 281.32 1619.12 303.09 1621.75 303.09C1624.38 303.09 1624.38 277.7 1627.01 277.7C1629.64 277.7 1629.64 278.5 1632.26 278.5C1634.89 278.5 1634.89 284.55 1637.52 284.55C1640.15 284.55 1640.15 282.53 1642.78 282.53C1645.4 282.53 1645.4 270.44 1648.03 270.44C1650.66 270.44 1650.66 303.09 1653.29 303.09C1655.92 303.09 1655.92 301.07 1658.54 301.07C1661.17 301.07 1661.17 370.79 1663.8 370.79C1666.43 370.79 1666.43 287.77 1669.06 287.77C1671.68 287.77 1671.68 284.95 1674.31 284.95C1676.94 284.95 1676.94 292.21 1679.57 292.21C1682.2 292.21 1682.2 340.16 1684.82 340.16C1687.45 340.16 1687.45 325.65 1690.08 325.65C1692.71 325.65 1692.71 323.64 1695.34 323.64C1697.96 323.64 1697.96 281.32 1700.59 281.32C1703.22 281.32 1703.22 274.88 1705.85 274.88C1708.48 274.88 1708.48 297.44 1711.1 297.44C1713.73 297.44 1713.73 313.16 1716.36 313.16C1718.99 313.16 1718.99 319.21 1721.62 319.21C1724.24 319.21 1724.24 307.52 1726.87 307.52C1729.5 307.52 1729.5 327.27 1732.13 327.27C1734.76 327.27 1734.76 306.71 1737.38 306.71C1740.01 306.71 1740.01 316.79 1742.64 316.79C1745.27 316.79 1745.27 338.15 1747.9 338.15C1750.52 338.15 1750.52 282.13 1753.15 282.13C1755.78 282.13 1755.78 320.01 1758.41 320.01C1761.04 320.01 1761.04 302.28 1763.66 302.28C1766.29 302.28 1766.29 285.76 1768.92 285.76C1771.55 285.76 1771.55 351.85 1774.18 351.85C1776.8 351.85 1776.8 296.64 1779.43 296.64C1782.06 296.64 1782.06 286.56 1784.69 286.56C1787.32 286.56 1787.32 267.62 1789.94 267.62C1792.57 267.62 1792.57 281.32 1795.2 281.32C1797.83 281.32 1797.83 253.92 1800.46 253.92C1803.08 253.92 1803.08 239.82 1805.71 239.82C1808.34 239.82 1808.34 274.88 1810.97 274.88C1813.6 274.88 1813.6 315.58 1816.22 315.58C1818.85 315.58 1818.85 338.15 1821.48 338.15C1824.11 338.15 1824.11 307.52 1826.74 307.52C1829.36 307.52 1829.36 310.34 1831.99 310.34C1834.62 310.34 1834.62 311.95 1837.25 311.95C1839.88 311.95 1839.88 332.1 1842.5 332.1C1845.13 332.1 1845.13 280.52 1847.76 280.52C1850.39 280.52 1850.39 322.83 1853.02 322.83C1855.64 322.83 1855.64 302.28 1858.27 302.28C1860.9 302.28 1860.9 327.27 1863.53 327.27C1866.16 327.27 1866.16 288.58 1868.78 288.58L1868.78 373.61C1866.16 373.61 1866.16 375.63 1863.53 375.63C1860.9 375.63 1860.9 382.88 1858.27 382.88C1855.64 382.88 1855.64 367.16 1853.02 367.16C1850.39 367.16 1850.39 372 1847.76 372C1845.13 372 1845.13 363.54 1842.5 363.54C1839.88 363.54 1839.88 368.37 1837.25 368.37C1834.62 368.37 1834.62 373.61 1831.99 373.61C1829.36 373.61 1829.36 379.25 1826.74 379.25C1824.11 379.25 1824.11 379.25 1821.48 379.25C1818.85 379.25 1818.85 382.88 1816.22 382.88C1813.6 382.88 1813.6 380.87 1810.97 380.87C1808.34 380.87 1808.34 377.24 1805.71 377.24C1803.08 377.24 1803.08 379.25 1800.46 379.25C1797.83 379.25 1797.83 379.25 1795.2 379.25C1792.57 379.25 1792.57 368.37 1789.94 368.37C1787.32 368.37 1787.32 369.18 1784.69 369.18C1782.06 369.18 1782.06 382.88 1779.43 382.88C1776.8 382.88 1776.8 373.61 1774.18 373.61C1771.55 373.61 1771.55 376.43 1768.92 376.43C1766.29 376.43 1766.29 378.04 1763.66 378.04C1761.04 378.04 1761.04 373.61 1758.41 373.61C1755.78 373.61 1755.78 368.37 1753.15 368.37C1750.52 368.37 1750.52 380.06 1747.9 380.06C1745.27 380.06 1745.27 373.61 1742.64 373.61C1740.01 373.61 1740.01 355.48 1737.38 355.48C1734.76 355.48 1734.76 356.69 1732.13 356.69C1729.5 356.69 1729.5 342.58 1726.87 342.58C1724.24 342.58 1724.24 332.1 1721.62 332.1C1718.99 332.1 1718.99 342.98 1716.36 342.98C1713.73 342.98 1713.73 348.22 1711.1 348.22C1708.48 348.22 1708.48 351.85 1705.85 351.85C1703.22 351.85 1703.22 344.6 1700.59 344.6C1697.96 344.6 1697.96 362.73 1695.34 362.73C1692.71 362.73 1692.71 375.63 1690.08 375.63C1687.45 375.63 1687.45 383.69 1684.82 383.69C1682.2 383.69 1682.2 369.98 1679.57 369.98C1676.94 369.98 1676.94 384.49 1674.31 384.49C1671.68 384.49 1671.68 380.87 1669.06 380.87C1666.43 380.87 1666.43 372 1663.8 372C1661.17 372 1661.17 373.61 1658.54 373.61C1655.92 373.61 1655.92 379.25 1653.29 379.25C1650.66 379.25 1650.66 378.04 1648.03 378.04C1645.4 378.04 1645.4 370.79 1642.78 370.79C1640.15 370.79 1640.15 384.49 1637.52 384.49C1634.89 384.49 1634.89 379.25 1632.26 379.25C1629.64 379.25 1629.64 379.25 1627.01 379.25C1624.38 379.25 1624.38 379.25 1621.75 379.25C1619.12 379.25 1619.12 355.48 1616.5 355.48C1613.87 355.48 1613.87 377.24 1611.24 377.24C1608.61 377.24 1608.61 384.09 1605.98 384.09C1603.36 384.09 1603.36 384.49 1600.73 384.49C1598.1 384.49 1598.1 373.61 1595.47 373.61C1592.84 373.61 1592.84 368.37 1590.22 368.37C1587.59 368.37 1587.59 363.54 1584.96 363.54C1582.33 363.54 1582.33 361.12 1579.7 361.12C1577.08 361.12 1577.08 359.91 1574.45 359.91C1571.82 359.91 1571.82 361.92 1569.19 361.92C1566.56 361.92 1566.56 368.37 1563.94 368.37C1561.31 368.37 1561.31 375.63 1558.68 375.63C1556.05 375.63 1556.05 372 1553.42 372C1550.8 372 1550.8 378.04 1548.17 378.04C1545.54 378.04 1545.54 375.22 1542.91 375.22C1540.28 375.22 1540.28 380.06 1537.66 380.06C1535.03 380.06 1535.03 388.12 1532.4 388.12C1529.77 388.12 1529.77 386.51 1527.14 386.51C1524.52 386.51 1524.52 382.88 1521.89 382.88C1519.26 382.88 1519.26 378.04 1516.63 378.04C1514 378.04 1514 373.61 1511.38 373.61C1508.75 373.61 1508.75 368.37 1506.12 368.37C1503.49 368.37 1503.49 353.86 1500.86 353.86C1498.24 353.86 1498.24 372.81 1495.61 372.81C1492.98 372.81 1492.98 372 1490.35 372C1487.72 372 1487.72 368.37 1485.1 368.37C1482.47 368.37 1482.47 357.49 1479.84 357.49C1477.21 357.49 1477.21 367.16 1474.58 367.16C1471.96 367.16 1471.96 367.97 1469.33 367.97C1466.7 367.97 1466.7 355.48 1464.07 355.48C1461.44 355.48 1461.44 353.86 1458.82 353.86C1456.19 353.86 1456.19 359.51 1453.56 359.51C1450.93 359.51 1450.93 355.48 1448.3 355.48C1445.68 355.48 1445.68 333.31 1443.05 333.31C1440.42 333.31 1440.42 372 1437.79 372C1435.16 372 1435.16 369.98 1432.54 369.98C1429.91 369.98 1429.91 377.24 1427.28 377.24C1424.65 377.24 1424.65 384.89 1422.02 384.89C1419.4 384.89 1419.4 384.49 1416.77 384.49C1414.14 384.49 1414.14 378.04 1411.51 378.04C1408.88 378.04 1408.88 378.04 1406.26 378.04C1403.63 378.04 1403.63 361.12 1401 361.12Z" fill="rgba(79,168,213,0.045)" stroke="none"/><path d="M1401 361.12C1403.63 361.12 1403.63 378.04 1406.26 378.04C1408.88 378.04 1408.88 378.04 1411.51 378.04C1414.14 378.04 1414.14 384.49 1416.77 384.49C1419.4 384.49 1419.4 384.89 1422.02 384.89C1424.65 384.89 1424.65 377.24 1427.28 377.24C1429.91 377.24 1429.91 369.98 1432.54 369.98C1435.16 369.98 1435.16 372 1437.79 372C1440.42 372 1440.42 333.31 1443.05 333.31C1445.68 333.31 1445.68 355.48 1448.3 355.48C1450.93 355.48 1450.93 359.51 1453.56 359.51C1456.19 359.51 1456.19 353.86 1458.82 353.86C1461.44 353.86 1461.44 355.48 1464.07 355.48C1466.7 355.48 1466.7 367.97 1469.33 367.97C1471.96 367.97 1471.96 367.16 1474.58 367.16C1477.21 367.16 1477.21 357.49 1479.84 357.49C1482.47 357.49 1482.47 368.37 1485.1 368.37C1487.72 368.37 1487.72 372 1490.35 372C1492.98 372 1492.98 372.81 1495.61 372.81C1498.24 372.81 1498.24 353.86 1500.86 353.86C1503.49 353.86 1503.49 368.37 1506.12 368.37C1508.75 368.37 1508.75 373.61 1511.38 373.61C1514 373.61 1514 378.04 1516.63 378.04C1519.26 378.04 1519.26 382.88 1521.89 382.88C1524.52 382.88 1524.52 386.51 1527.14 386.51C1529.77 386.51 1529.77 388.12 1532.4 388.12C1535.03 388.12 1535.03 380.06 1537.66 380.06C1540.28 380.06 1540.28 375.22 1542.91 375.22C1545.54 375.22 1545.54 378.04 1548.17 378.04C1550.8 378.04 1550.8 372 1553.42 372C1556.05 372 1556.05 375.63 1558.68 375.63C1561.31 375.63 1561.31 368.37 1563.94 368.37C1566.56 368.37 1566.56 361.92 1569.19 361.92C1571.82 361.92 1571.82 359.91 1574.45 359.91C1577.08 359.91 1577.08 361.12 1579.7 361.12C1582.33 361.12 1582.33 363.54 1584.96 363.54C1587.59 363.54 1587.59 368.37 1590.22 368.37C1592.84 368.37 1592.84 373.61 1595.47 373.61C1598.1 373.61 1598.1 384.49 1600.73 384.49C1603.36 384.49 1603.36 384.09 1605.98 384.09C1608.61 384.09 1608.61 377.24 1611.24 377.24C1613.87 377.24 1613.87 355.48 1616.5 355.48C1619.12 355.48 1619.12 379.25 1621.75 379.25C1624.38 379.25 1624.38 379.25 1627.01 379.25C1629.64 379.25 1629.64 379.25 1632.26 379.25C1634.89 379.25 1634.89 384.49 1637.52 384.49C1640.15 384.49 1640.15 370.79 1642.78 370.79C1645.4 370.79 1645.4 378.04 1648.03 378.04C1650.66 378.04 1650.66 379.25 1653.29 379.25C1655.92 379.25 1655.92 373.61 1658.54 373.61C1661.17 373.61 1661.17 372 1663.8 372C1666.43 372 1666.43 380.87 1669.06 380.87C1671.68 380.87 1671.68 384.49 1674.31 384.49C1676.94 384.49 1676.94 369.98 1679.57 369.98C1682.2 369.98 1682.2 383.69 1684.82 383.69C1687.45 383.69 1687.45 375.63 1690.08 375.63C1692.71 375.63 1692.71 362.73 1695.34 362.73C1697.96 362.73 1697.96 344.6 1700.59 344.6C1703.22 344.6 1703.22 351.85 1705.85 351.85C1708.48 351.85 1708.48 348.22 1711.1 348.22C1713.73 348.22 1713.73 342.98 1716.36 342.98C1718.99 342.98 1718.99 332.1 1721.62 332.1C1724.24 332.1 1724.24 342.58 1726.87 342.58C1729.5 342.58 1729.5 356.69 1732.13 356.69C1734.76 356.69 1734.76 355.48 1737.38 355.48C1740.01 355.48 1740.01 373.61 1742.64 373.61C1745.27 373.61 1745.27 380.06 1747.9 380.06C1750.52 380.06 1750.52 368.37 1753.15 368.37C1755.78 368.37 1755.78 373.61 1758.41 373.61C1761.04 373.61 1761.04 378.04 1763.66 378.04C1766.29 378.04 1766.29 376.43 1768.92 376.43C1771.55 376.43 1771.55 373.61 1774.18 373.61C1776.8 373.61 1776.8 382.88 1779.43 382.88C1782.06 382.88 1782.06 369.18 1784.69 369.18C1787.32 369.18 1787.32 368.37 1789.94 368.37C1792.57 368.37 1792.57 379.25 1795.2 379.25C1797.83 379.25 1797.83 379.25 1800.46 379.25C1803.08 379.25 1803.08 377.24 1805.71 377.24C1808.34 377.24 1808.34 380.87 1810.97 380.87C1813.6 380.87 1813.6 382.88 1816.22 382.88C1818.85 382.88 1818.85 379.25 1821.48 379.25C1824.11 379.25 1824.11 379.25 1826.74 379.25C1829.36 379.25 1829.36 373.61 1831.99 373.61C1834.62 373.61 1834.62 368.37 1837.25 368.37C1839.88 368.37 1839.88 363.54 1842.5 363.54C1845.13 363.54 1845.13 372 1847.76 372C1850.39 372 1850.39 367.16 1853.02 367.16C1855.64 367.16 1855.64 382.88 1858.27 382.88C1860.9 382.88 1860.9 375.63 1863.53 375.63C1866.16 375.63 1866.16 373.61 1868.78 373.61" fill="none" stroke="#86b6cf" stroke-width="1.7" stroke-dasharray="0.01 3.6" stroke-linecap="round"/><path d="M1401 369.98C1403.63 369.98 1403.63 372.81 1406.26 372.81C1408.88 372.81 1408.88 367.16 1411.51 367.16C1414.14 367.16 1414.14 375.63 1416.77 375.63C1419.4 375.63 1419.4 374.42 1422.02 374.42C1424.65 374.42 1424.65 377.64 1427.28 377.64C1429.91 377.64 1429.91 365.55 1432.54 365.55C1435.16 365.55 1435.16 370.79 1437.79 370.79C1440.42 370.79 1440.42 376.43 1443.05 376.43C1445.68 376.43 1445.68 372.4 1448.3 372.4C1450.93 372.4 1450.93 381.27 1453.56 381.27C1456.19 381.27 1456.19 378.04 1458.82 378.04C1461.44 378.04 1461.44 380.87 1464.07 380.87C1466.7 380.87 1466.7 375.63 1469.33 375.63C1471.96 375.63 1471.96 378.04 1474.58 378.04C1477.21 378.04 1477.21 374.01 1479.84 374.01C1482.47 374.01 1482.47 372.81 1485.1 372.81C1487.72 372.81 1487.72 374.42 1490.35 374.42C1492.98 374.42 1492.98 382.88 1495.61 382.88C1498.24 382.88 1498.24 369.18 1500.86 369.18C1503.49 369.18 1503.49 322.43 1506.12 322.43C1508.75 322.43 1508.75 372.81 1511.38 372.81C1514 372.81 1514 372.4 1516.63 372.4C1519.26 372.4 1519.26 372 1521.89 372C1524.52 372 1524.52 377.64 1527.14 377.64C1529.77 377.64 1529.77 380.06 1532.4 380.06C1535.03 380.06 1535.03 384.09 1537.66 384.09C1540.28 384.09 1540.28 377.24 1542.91 377.24C1545.54 377.24 1545.54 375.63 1548.17 375.63C1550.8 375.63 1550.8 369.98 1553.42 369.98C1556.05 369.98 1556.05 379.25 1558.68 379.25C1561.31 379.25 1561.31 379.66 1563.94 379.66C1566.56 379.66 1566.56 368.37 1569.19 368.37C1571.82 368.37 1571.82 376.43 1574.45 376.43C1577.08 376.43 1577.08 359.1 1579.7 359.1C1582.33 359.1 1582.33 344.6 1584.96 344.6C1587.59 344.6 1587.59 353.86 1590.22 353.86C1592.84 353.86 1592.84 363.54 1595.47 363.54C1598.1 363.54 1598.1 338.15 1600.73 338.15C1603.36 338.15 1603.36 369.18 1605.98 369.18C1608.61 369.18 1608.61 328.48 1611.24 328.48C1613.87 328.48 1613.87 281.32 1616.5 281.32C1619.12 281.32 1619.12 303.09 1621.75 303.09C1624.38 303.09 1624.38 277.7 1627.01 277.7C1629.64 277.7 1629.64 278.5 1632.26 278.5C1634.89 278.5 1634.89 284.55 1637.52 284.55C1640.15 284.55 1640.15 282.53 1642.78 282.53C1645.4 282.53 1645.4 270.44 1648.03 270.44C1650.66 270.44 1650.66 303.09 1653.29 303.09C1655.92 303.09 1655.92 301.07 1658.54 301.07C1661.17 301.07 1661.17 370.79 1663.8 370.79C1666.43 370.79 1666.43 287.77 1669.06 287.77C1671.68 287.77 1671.68 284.95 1674.31 284.95C1676.94 284.95 1676.94 292.21 1679.57 292.21C1682.2 292.21 1682.2 340.16 1684.82 340.16C1687.45 340.16 1687.45 325.65 1690.08 325.65C1692.71 325.65 1692.71 323.64 1695.34 323.64C1697.96 323.64 1697.96 281.32 1700.59 281.32C1703.22 281.32 1703.22 274.88 1705.85 274.88C1708.48 274.88 1708.48 297.44 1711.1 297.44C1713.73 297.44 1713.73 313.16 1716.36 313.16C1718.99 313.16 1718.99 319.21 1721.62 319.21C1724.24 319.21 1724.24 307.52 1726.87 307.52C1729.5 307.52 1729.5 327.27 1732.13 327.27C1734.76 327.27 1734.76 306.71 1737.38 306.71C1740.01 306.71 1740.01 316.79 1742.64 316.79C1745.27 316.79 1745.27 338.15 1747.9 338.15C1750.52 338.15 1750.52 282.13 1753.15 282.13C1755.78 282.13 1755.78 320.01 1758.41 320.01C1761.04 320.01 1761.04 302.28 1763.66 302.28C1766.29 302.28 1766.29 285.76 1768.92 285.76C1771.55 285.76 1771.55 351.85 1774.18 351.85C1776.8 351.85 1776.8 296.64 1779.43 296.64C1782.06 296.64 1782.06 286.56 1784.69 286.56C1787.32 286.56 1787.32 267.62 1789.94 267.62C1792.57 267.62 1792.57 281.32 1795.2 281.32C1797.83 281.32 1797.83 253.92 1800.46 253.92C1803.08 253.92 1803.08 239.82 1805.71 239.82C1808.34 239.82 1808.34 274.88 1810.97 274.88C1813.6 274.88 1813.6 315.58 1816.22 315.58C1818.85 315.58 1818.85 338.15 1821.48 338.15C1824.11 338.15 1824.11 307.52 1826.74 307.52C1829.36 307.52 1829.36 310.34 1831.99 310.34C1834.62 310.34 1834.62 311.95 1837.25 311.95C1839.88 311.95 1839.88 332.1 1842.5 332.1C1845.13 332.1 1845.13 280.52 1847.76 280.52C1850.39 280.52 1850.39 322.83 1853.02 322.83C1855.64 322.83 1855.64 302.28 1858.27 302.28C1860.9 302.28 1860.9 327.27 1863.53 327.27C1866.16 327.27 1866.16 288.58 1868.78 288.58" fill="none" stroke="#4fa8d5" stroke-width="2" stroke-linejoin="round"/></svg>
<div class="t" style="left:1201px;width:400px;text-align:center;top:412.54px;font-size:10px;line-height:12px;font-weight:normal;color:#616161;">Sep 17</div>
<div class="t" style="left:1253.56px;width:400px;text-align:center;top:412.54px;font-size:10px;line-height:12px;font-weight:normal;color:#616161;">Sep 27</div>
<div class="t" style="left:1306.12px;width:400px;text-align:center;top:412.54px;font-size:10px;line-height:12px;font-weight:normal;color:#616161;">Oct 7</div>
<div class="t" style="left:1358.68px;width:400px;text-align:center;top:412.54px;font-size:10px;line-height:12px;font-weight:normal;color:#616161;">Oct 17</div>
<div class="t" style="left:1411.24px;width:400px;text-align:center;top:412.54px;font-size:10px;line-height:12px;font-weight:normal;color:#616161;">Oct 27</div>
<div class="t" style="left:1463.8px;width:400px;text-align:center;top:412.54px;font-size:10px;line-height:12px;font-weight:normal;color:#616161;">Nov 6</div>
<div class="t" style="left:1516.36px;width:400px;text-align:center;top:412.54px;font-size:10px;line-height:12px;font-weight:normal;color:#616161;">Nov 16</div>
<div class="t" style="left:1568.92px;width:400px;text-align:center;top:412.54px;font-size:10px;line-height:12px;font-weight:normal;color:#616161;">Nov 26</div>
<div class="t" style="left:1621.48px;width:400px;text-align:center;top:412.54px;font-size:10px;line-height:12px;font-weight:normal;color:#616161;">Dec 6</div>
<div class="abs" style="left:1491px;top:451.4px;width:12px;height:2px;background:#4fa8d5;border-radius:1px"></div>
<div class="t" style="left:1508.5px;top:446.54px;font-size:10px;line-height:12px;font-weight:normal;color:#616161;">Sep 17–Dec 15, 2024</div>
<div class="abs" style="left:1621.5px;top:451.4px;width:12px;height:0;border-top:2px dotted #9ccfe8"></div>
<div class="t" style="left:1639px;top:446.54px;font-size:10px;line-height:12px;font-weight:normal;color:#616161;">Jun 19–Sep 16, 2024</div>
<div class="t" style="left:252.5px;top:505.5px;font-size:13px;line-height:16px;font-weight:bold;color:#303030;transform:scaleX(0.906);transform-origin:0 0;">Online store conversion rate</div>
<div class="abs" style="left:252.5px;top:521px;width:160px;height:0;border-top:1px dotted #bdbdbd"></div>
<div class="t" style="left:252.5px;top:529.64px;font-size:19.5px;line-height:24px;font-weight:bold;color:#303030;">0.42%</div>
<div class="t" style="left:315px;top:537.53px;font-size:10px;line-height:12px;font-weight:bold;color:#29845a;"><svg width="8" height="8" viewBox="0 0 8 8" style="position:relative;display:inline-block;vertical-align:0px;margin-right:2px"><path d="M1.5 6.5 L6 2 M2.5 1.8 H6.2 V5.5" fill="none" stroke="#29845a" stroke-width="1.4"/></svg>18%</div>
<div class="t" style="left:252.5px;top:578.87px;font-size:12.5px;line-height:16px;font-weight:normal;color:#303030;">Added to cart</div>
<div class="t" style="left:252.5px;top:596.67px;font-size:12.5px;line-height:16px;font-weight:normal;color:#616161;">184 sessions</div>
<div class="t" style="left:252.5px;width:400px;text-align:right;top:587.97px;font-size:12.5px;line-height:16px;font-weight:normal;color:#303030;">1.24%</div>
<div class="t" style="left:363.5px;width:400px;text-align:right;top:589.66px;font-size:10.5px;line-height:13px;font-weight:bold;color:#4a4a4a;"><svg width="8" height="8" viewBox="0 0 8 8" style="position:relative;display:inline-block;vertical-align:0px;margin-right:2px"><path d="M1.5 1.5 L6 6 M6.2 2.5 V6.2 H2.5" fill="none" stroke="#4a4a4a" stroke-width="1.4"/></svg>39%</div>
<div class="t" style="left:252.5px;top:636.77px;font-size:12.5px;line-height:16px;font-weight:normal;color:#303030;">Reached checkout</div>
<div class="t" style="left:252.5px;top:654.87px;font-size:12.5px;line-height:16px;font-weight:normal;color:#616161;">83 sessions</div>
<div class="t" style="left:252.5px;width:400px;text-align:right;top:646.17px;font-size:12.5px;line-height:16px;font-weight:normal;color:#303030;">0.56%</div>
<div class="t" style="left:363.5px;width:400px;text-align:right;top:647.86px;font-size:10.5px;line-height:13px;font-weight:bold;color:#4a4a4a;"><svg width="8" height="8" viewBox="0 0 8 8" style="position:relative;display:inline-block;vertical-align:0px;margin-right:2px"><path d="M1.5 1.5 L6 6 M6.2 2.5 V6.2 H2.5" fill="none" stroke="#4a4a4a" stroke-width="1.4"/></svg>36%</div>
<div class="t" style="left:252.5px;top:695.97px;font-size:12.5px;line-height:16px;font-weight:normal;color:#303030;">Sessions converted</div>
<div class="t" style="left:252.5px;top:714.17px;font-size:12.5px;line-height:16px;font-weight:normal;color:#616161;">63 sessions</div>
<div class="t" style="left:252.5px;width:400px;text-align:right;top:705.17px;font-size:12.5px;line-height:16px;font-weight:normal;color:#303030;">0.42%</div>
<div class="t" style="left:363.5px;width:400px;text-align:right;top:706.86px;font-size:10.5px;line-height:13px;font-weight:bold;color:#29845a;"><svg width="8" height="8" viewBox="0 0 8 8" style="position:relative;display:inline-block;vertical-align:0px;margin-right:2px"><path d="M1.5 6.5 L6 2 M2.5 1.8 H6.2 V5.5" fill="none" stroke="#29845a" stroke-width="1.4"/></svg>18%</div>
<div class="abs" style="left:239px;top:624px;width:538px;height:1px;background:#ebebeb"></div>
<div class="abs" style="left:239px;top:683px;width:538px;height:1px;background:#ebebeb"></div>
<div class="t" style="left:807px;top:505.5px;font-size:13px;line-height:16px;font-weight:bold;color:#303030;transform:scaleX(0.906);transform-origin:0 0;">Total orders</div>
<div class="abs" style="left:807px;top:521px;width:67px;height:0;border-top:1px dotted #bdbdbd"></div>
<div class="t" style="left:807px;top:529.64px;font-size:19.5px;line-height:24px;font-weight:bold;color:#303030;">81</div>
<div class="t" style="left:832px;top:537.53px;font-size:10px;line-height:12px;font-weight:bold;color:#29845a;"><svg width="8" height="8" viewBox="0 0 8 8" style="position:relative;display:inline-block;vertical-align:0px;margin-right:2px"><path d="M1.5 6.5 L6 2 M2.5 1.8 H6.2 V5.5" fill="none" stroke="#29845a" stroke-width="1.4"/></svg>170%</div>
<div class="t" style="left:809px;top:564.19px;font-size:11px;line-height:14px;font-weight:normal;color:#616161;">6</div>
<div class="t" style="left:809px;top:618.19px;font-size:11px;line-height:14px;font-weight:normal;color:#616161;">4</div>
<div class="t" style="left:809px;top:671.99px;font-size:11px;line-height:14px;font-weight:normal;color:#616161;">2</div>
<div class="t" style="left:809px;top:725.59px;font-size:11px;line-height:14px;font-weight:normal;color:#616161;">0</div>
<div class="abs" style="left:835.5px;top:570.5px;width:479.5px;height:1px;background:#ececec"></div>
<div class="abs" style="left:835.5px;top:624.5px;width:479.5px;height:1px;background:#ececec"></div>
<div class="abs" style="left:835.5px;top:678.3px;width:479.5px;height:1px;background:#ececec"></div>
<div class="abs" style="left:835.5px;top:731.9px;width:479.5px;height:1px;background:#ececec"></div>
<svg style="left:0;top:0" width="1919" height="947"><path d="M835.5 705.5C838.19 705.5 838.19 732.4 840.88 732.4C843.58 732.4 843.58 732.4 846.27 732.4C848.96 732.4 848.96 705.5 851.65 705.5C854.35 705.5 854.35 732.4 857.04 732.4C859.73 732.4 859.73 678.6 862.42 678.6C865.12 678.6 865.12 732.4 867.81 732.4C870.5 732.4 870.5 732.4 873.2 732.4C875.89 732.4 875.89 732.4 878.58 732.4C881.27 732.4 881.27 705.5 883.97 705.5C886.66 705.5 886.66 732.4 889.35 732.4C892.04 732.4 892.04 732.4 894.74 732.4C897.43 732.4 897.43 732.4 900.12 732.4C902.81 732.4 902.81 732.4 905.5 732.4C908.2 732.4 908.2 732.4 910.89 732.4C913.58 732.4 913.58 705.5 916.27 705.5C918.97 705.5 918.97 732.4 921.66 732.4C924.35 732.4 924.35 705.5 927.04 705.5C929.74 705.5 929.74 732.4 932.43 732.4C935.12 732.4 935.12 732.4 937.82 732.4C940.51 732.4 940.51 732.4 943.2 732.4C945.89 732.4 945.89 732.4 948.59 732.4C951.28 732.4 951.28 732.4 953.97 732.4C956.66 732.4 956.66 732.4 959.36 732.4C962.05 732.4 962.05 732.4 964.74 732.4C967.43 732.4 967.43 705.5 970.12 705.5C972.82 705.5 972.82 678.6 975.51 678.6C978.2 678.6 978.2 732.4 980.89 732.4C983.59 732.4 983.59 705.5 986.28 705.5C988.97 705.5 988.97 732.4 991.66 732.4C994.36 732.4 994.36 705.5 997.05 705.5C999.74 705.5 999.74 732.4 1002.43 732.4C1005.13 732.4 1005.13 705.5 1007.82 705.5C1010.51 705.5 1010.51 732.4 1013.2 732.4C1015.9 732.4 1015.9 732.4 1018.59 732.4C1021.28 732.4 1021.28 624.8 1023.98 624.8C1026.67 624.8 1026.67 732.4 1029.36 732.4C1032.05 732.4 1032.05 732.4 1034.74 732.4C1037.44 732.4 1037.44 732.4 1040.13 732.4C1042.82 732.4 1042.82 705.5 1045.51 705.5C1048.21 705.5 1048.21 678.6 1050.9 678.6C1053.59 678.6 1053.59 732.4 1056.29 732.4C1058.98 732.4 1058.98 732.4 1061.67 732.4C1064.36 732.4 1064.36 732.4 1067.06 732.4C1069.75 732.4 1069.75 651.7 1072.44 651.7C1075.13 651.7 1075.13 705.5 1077.83 705.5C1080.52 705.5 1080.52 732.4 1083.21 732.4C1085.9 732.4 1085.9 678.6 1088.6 678.6C1091.29 678.6 1091.29 705.5 1093.98 705.5C1096.67 705.5 1096.67 732.4 1099.37 732.4C1102.06 732.4 1102.06 705.5 1104.75 705.5C1107.44 705.5 1107.44 732.4 1110.13 732.4C1112.83 732.4 1112.83 732.4 1115.52 732.4C1118.21 732.4 1118.21 732.4 1120.9 732.4C1123.6 732.4 1123.6 732.4 1126.29 732.4C1128.98 732.4 1128.98 705.5 1131.67 705.5C1134.37 705.5 1134.37 678.6 1137.06 678.6C1139.75 678.6 1139.75 624.8 1142.44 624.8C1145.14 624.8 1145.14 705.5 1147.83 705.5C1150.52 705.5 1150.52 705.5 1153.21 705.5C1155.91 705.5 1155.91 732.4 1158.6 732.4C1161.29 732.4 1161.29 678.6 1163.99 678.6C1166.68 678.6 1166.68 678.6 1169.37 678.6C1172.06 678.6 1172.06 678.6 1174.76 678.6C1177.45 678.6 1177.45 705.5 1180.14 705.5C1182.83 705.5 1182.83 571 1185.53 571C1188.22 571 1188.22 678.6 1190.91 678.6C1193.6 678.6 1193.6 651.7 1196.3 651.7C1198.99 651.7 1198.99 705.5 1201.68 705.5C1204.37 705.5 1204.37 705.5 1207.07 705.5C1209.76 705.5 1209.76 705.5 1212.45 705.5C1215.14 705.5 1215.14 624.8 1217.84 624.8C1220.53 624.8 1220.53 678.6 1223.22 678.6C1225.91 678.6 1225.91 732.4 1228.61 732.4C1231.3 732.4 1231.3 705.5 1233.99 705.5C1236.68 705.5 1236.68 732.4 1239.38 732.4C1242.07 732.4 1242.07 651.7 1244.76 651.7C1247.45 651.7 1247.45 705.5 1250.14 705.5C1252.84 705.5 1252.84 678.6 1255.53 678.6C1258.22 678.6 1258.22 705.5 1260.91 705.5C1263.61 705.5 1263.61 732.4 1266.3 732.4C1268.99 732.4 1268.99 678.6 1271.68 678.6C1274.38 678.6 1274.38 732.4 1277.07 732.4C1279.76 732.4 1279.76 732.4 1282.45 732.4C1285.15 732.4 1285.15 732.4 1287.84 732.4C1290.53 732.4 1290.53 624.8 1293.22 624.8C1295.92 624.8 1295.92 732.4 1298.61 732.4C1301.3 732.4 1301.3 732.4 1303.99 732.4C1306.69 732.4 1306.69 678.6 1309.38 678.6C1312.07 678.6 1312.07 705.5 1314.76 705.5L1314.76 732.4C1312.07 732.4 1312.07 732.4 1309.38 732.4C1306.69 732.4 1306.69 732.4 1303.99 732.4C1301.3 732.4 1301.3 732.4 1298.61 732.4C1295.92 732.4 1295.92 732.4 1293.22 732.4C1290.53 732.4 1290.53 732.4 1287.84 732.4C1285.15 732.4 1285.15 732.4 1282.45 732.4C1279.76 732.4 1279.76 732.4 1277.07 732.4C1274.38 732.4 1274.38 705.5 1271.68 705.5C1268.99 705.5 1268.99 732.4 1266.3 732.4C1263.61 732.4 1263.61 732.4 1260.91 732.4C1258.22 732.4 1258.22 732.4 1255.53 732.4C1252.84 732.4 1252.84 705.5 1250.14 705.5C1247.45 705.5 1247.45 705.5 1244.76 705.5C1242.07 705.5 1242.07 732.4 1239.38 732.4C1236.68 732.4 1236.68 705.5 1233.99 705.5C1231.3 705.5 1231.3 705.5 1228.61 705.5C1225.91 705.5 1225.91 732.4 1223.22 732.4C1220.53 732.4 1220.53 732.4 1217.84 732.4C1215.14 732.4 1215.14 732.4 1212.45 732.4C1209.76 732.4 1209.76 732.4 1207.07 732.4C1204.37 732.4 1204.37 732.4 1201.68 732.4C1198.99 732.4 1198.99 732.4 1196.3 732.4C1193.6 732.4 1193.6 732.4 1190.91 732.4C1188.22 732.4 1188.22 732.4 1185.53 732.4C1182.83 732.4 1182.83 705.5 1180.14 705.5C1177.45 705.5 1177.45 705.5 1174.76 705.5C1172.06 705.5 1172.06 732.4 1169.37 732.4C1166.68 732.4 1166.68 732.4 1163.99 732.4C1161.29 732.4 1161.29 732.4 1158.6 732.4C1155.91 732.4 1155.91 732.4 1153.21 732.4C1150.52 732.4 1150.52 705.5 1147.83 705.5C1145.14 705.5 1145.14 705.5 1142.44 705.5C1139.75 705.5 1139.75 705.5 1137.06 705.5C1134.37 705.5 1134.37 732.4 1131.67 732.4C1128.98 732.4 1128.98 732.4 1126.29 732.4C1123.6 732.4 1123.6 732.4 1120.9 732.4C1118.21 732.4 1118.21 732.4 1115.52 732.4C1112.83 732.4 1112.83 732.4 1110.13 732.4C1107.44 732.4 1107.44 732.4 1104.75 732.4C1102.06 732.4 1102.06 732.4 1099.37 732.4C1096.67 732.4 1096.67 705.5 1093.98 705.5C1091.29 705.5 1091.29 732.4 1088.6 732.4C1085.9 732.4 1085.9 732.4 1083.21 732.4C1080.52 732.4 1080.52 732.4 1077.83 732.4C1075.13 732.4 1075.13 732.4 1072.44 732.4C1069.75 732.4 1069.75 732.4 1067.06 732.4C1064.36 732.4 1064.36 651.7 1061.67 651.7C1058.98 651.7 1058.98 732.4 1056.29 732.4C1053.59 732.4 1053.59 732.4 1050.9 732.4C1048.21 732.4 1048.21 732.4 1045.51 732.4C1042.82 732.4 1042.82 732.4 1040.13 732.4C1037.44 732.4 1037.44 732.4 1034.74 732.4C1032.05 732.4 1032.05 732.4 1029.36 732.4C1026.67 732.4 1026.67 732.4 1023.98 732.4C1021.28 732.4 1021.28 705.5 1018.59 705.5C1015.9 705.5 1015.9 732.4 1013.2 732.4C1010.51 732.4 1010.51 732.4 1007.82 732.4C1005.13 732.4 1005.13 732.4 1002.43 732.4C999.74 732.4 999.74 732.4 997.05 732.4C994.36 732.4 994.36 732.4 991.66 732.4C988.97 732.4 988.97 732.4 986.28 732.4C983.59 732.4 983.59 732.4 980.89 732.4C978.2 732.4 978.2 732.4 975.51 732.4C972.82 732.4 972.82 732.4 970.12 732.4C967.43 732.4 967.43 732.4 964.74 732.4C962.05 732.4 962.05 732.4 959.36 732.4C956.66 732.4 956.66 705.5 953.97 705.5C951.28 705.5 951.28 732.4 948.59 732.4C945.89 732.4 945.89 732.4 943.2 732.4C940.51 732.4 940.51 732.4 937.82 732.4C935.12 732.4 935.12 705.5 932.43 705.5C929.74 705.5 929.74 678.6 927.04 678.6C924.35 678.6 924.35 678.6 921.66 678.6C918.97 678.6 918.97 732.4 916.27 732.4C913.58 732.4 913.58 732.4 910.89 732.4C908.2 732.4 908.2 732.4 905.5 732.4C902.81 732.4 902.81 705.5 900.12 705.5C897.43 705.5 897.43 732.4 894.74 732.4C892.04 732.4 892.04 732.4 889.35 732.4C886.66 732.4 886.66 732.4 883.97 732.4C881.27 732.4 881.27 678.6 878.58 678.6C875.89 678.6 875.89 732.4 873.2 732.4C870.5 732.4 870.5 678.6 867.81 678.6C865.12 678.6 865.12 732.4 862.42 732.4C859.73 732.4 859.73 732.4 857.04 732.4C854.35 732.4 854.35 732.4 851.65 732.4C848.96 732.4 848.96 732.4 846.27 732.4C843.58 732.4 843.58 732.4 840.88 732.4C838.19 732.4 838.19 732.4 835.5 732.4Z" fill="rgba(79,168,213,0.045)" stroke="none"/><path d="M835.5 732.4C838.19 732.4 838.19 732.4 840.88 732.4C843.58 732.4 843.58 732.4 846.27 732.4C848.96 732.4 848.96 732.4 851.65 732.4C854.35 732.4 854.35 732.4 857.04 732.4C859.73 732.4 859.73 732.4 862.42 732.4C865.12 732.4 865.12 678.6 867.81 678.6C870.5 678.6 870.5 732.4 873.2 732.4C875.89 732.4 875.89 678.6 878.58 678.6C881.27 678.6 881.27 732.4 883.97 732.4C886.66 732.4 886.66 732.4 889.35 732.4C892.04 732.4 892.04 732.4 894.74 732.4C897.43 732.4 897.43 705.5 900.12 705.5C902.81 705.5 902.81 732.4 905.5 732.4C908.2 732.4 908.2 732.4 910.89 732.4C913.58 732.4 913.58 732.4 916.27 732.4C918.97 732.4 918.97 678.6 921.66 678.6C924.35 678.6 924.35 678.6 927.04 678.6C929.74 678.6 929.74 705.5 932.43 705.5C935.12 705.5 935.12 732.4 937.82 732.4C940.51 732.4 940.51 732.4 943.2 732.4C945.89 732.4 945.89 732.4 948.59 732.4C951.28 732.4 951.28 705.5 953.97 705.5C956.66 705.5 956.66 732.4 959.36 732.4C962.05 732.4 962.05 732.4 964.74 732.4C967.43 732.4 967.43 732.4 970.12 732.4C972.82 732.4 972.82 732.4 975.51 732.4C978.2 732.4 978.2 732.4 980.89 732.4C983.59 732.4 983.59 732.4 986.28 732.4C988.97 732.4 988.97 732.4 991.66 732.4C994.36 732.4 994.36 732.4 997.05 732.4C999.74 732.4 999.74 732.4 1002.43 732.4C1005.13 732.4 1005.13 732.4 1007.82 732.4C1010.51 732.4 1010.51 732.4 1013.2 732.4C1015.9 732.4 1015.9 705.5 1018.59 705.5C1021.28 705.5 1021.28 732.4 1023.98 732.4C1026.67 732.4 1026.67 732.4 1029.36 732.4C1032.05 732.4 1032.05 732.4 1034.74 732.4C1037.44 732.4 1037.44 732.4 1040.13 732.4C1042.82 732.4 1042.82 732.4 1045.51 732.4C1048.21 732.4 1048.21 732.4 1050.9 732.4C1053.59 732.4 1053.59 732.4 1056.29 732.4C1058.98 732.4 1058.98 651.7 1061.67 651.7C1064.36 651.7 1064.36 732.4 1067.06 732.4C1069.75 732.4 1069.75 732.4 1072.44 732.4C1075.13 732.4 1075.13 732.4 1077.83 732.4C1080.52 732.4 1080.52 732.4 1083.21 732.4C1085.9 732.4 1085.9 732.4 1088.6 732.4C1091.29 732.4 1091.29 705.5 1093.98 705.5C1096.67 705.5 1096.67 732.4 1099.37 732.4C1102.06 732.4 1102.06 732.4 1104.75 732.4C1107.44 732.4 1107.44 732.4 1110.13 732.4C1112.83 732.4 1112.83 732.4 1115.52 732.4C1118.21 732.4 1118.21 732.4 1120.9 732.4C1123.6 732.4 1123.6 732.4 1126.29 732.4C1128.98 732.4 1128.98 732.4 1131.67 732.4C1134.37 732.4 1134.37 705.5 1137.06 705.5C1139.75 705.5 1139.75 705.5 1142.44 705.5C1145.14 705.5 1145.14 705.5 1147.83 705.5C1150.52 705.5 1150.52 732.4 1153.21 732.4C1155.91 732.4 1155.91 732.4 1158.6 732.4C1161.29 732.4 1161.29 732.4 1163.99 732.4C1166.68 732.4 1166.68 732.4 1169.37 732.4C1172.06 732.4 1172.06 705.5 1174.76 705.5C1177.45 705.5 1177.45 705.5 1180.14 705.5C1182.83 705.5 1182.83 732.4 1185.53 732.4C1188.22 732.4 1188.22 732.4 1190.91 732.4C1193.6 732.4 1193.6 732.4 1196.3 732.4C1198.99 732.4 1198.99 732.4 1201.68 732.4C1204.37 732.4 1204.37 732.4 1207.07 732.4C1209.76 732.4 1209.76 732.4 1212.45 732.4C1215.14 732.4 1215.14 732.4 1217.84 732.4C1220.53 732.4 1220.53 732.4 1223.22 732.4C1225.91 732.4 1225.91 705.5 1228.61 705.5C1231.3 705.5 1231.3 705.5 1233.99 705.5C1236.68 705.5 1236.68 732.4 1239.38 732.4C1242.07 732.4 1242.07 705.5 1244.76 705.5C1247.45 705.5 1247.45 705.5 1250.14 705.5C1252.84 705.5 1252.84 732.4 1255.53 732.4C1258.22 732.4 1258.22 732.4 1260.91 732.4C1263.61 732.4 1263.61 732.4 1266.3 732.4C1268.99 732.4 1268.99 705.5 1271.68 705.5C1274.38 705.5 1274.38 732.4 1277.07 732.4C1279.76 732.4 1279.76 732.4 1282.45 732.4C1285.15 732.4 1285.15 732.4 1287.84 732.4C1290.53 732.4 1290.53 732.4 1293.22 732.4C1295.92 732.4 1295.92 732.4 1298.61 732.4C1301.3 732.4 1301.3 732.4 1303.99 732.4C1306.69 732.4 1306.69 732.4 1309.38 732.4C1312.07 732.4 1312.07 732.4 1314.76 732.4" fill="none" stroke="#86b6cf" stroke-width="1.7" stroke-dasharray="0.01 3.6" stroke-linecap="round"/><path d="M835.5 705.5C838.19 705.5 838.19 732.4 840.88 732.4C843.58 732.4 843.58 732.4 846.27 732.4C848.96 732.4 848.96 705.5 851.65 705.5C854.35 705.5 854.35 732.4 857.04 732.4C859.73 732.4 859.73 678.6 862.42 678.6C865.12 678.6 865.12 732.4 867.81 732.4C870.5 732.4 870.5 732.4 873.2 732.4C875.89 732.4 875.89 732.4 878.58 732.4C881.27 732.4 881.27 705.5 883.97 705.5C886.66 705.5 886.66 732.4 889.35 732.4C892.04 732.4 892.04 732.4 894.74 732.4C897.43 732.4 897.43 732.4 900.12 732.4C902.81 732.4 902.81 732.4 905.5 732.4C908.2 732.4 908.2 732.4 910.89 732.4C913.58 732.4 913.58 705.5 916.27 705.5C918.97 705.5 918.97 732.4 921.66 732.4C924.35 732.4 924.35 705.5 927.04 705.5C929.74 705.5 929.74 732.4 932.43 732.4C935.12 732.4 935.12 732.4 937.82 732.4C940.51 732.4 940.51 732.4 943.2 732.4C945.89 732.4 945.89 732.4 948.59 732.4C951.28 732.4 951.28 732.4 953.97 732.4C956.66 732.4 956.66 732.4 959.36 732.4C962.05 732.4 962.05 732.4 964.74 732.4C967.43 732.4 967.43 705.5 970.12 705.5C972.82 705.5 972.82 678.6 975.51 678.6C978.2 678.6 978.2 732.4 980.89 732.4C983.59 732.4 983.59 705.5 986.28 705.5C988.97 705.5 988.97 732.4 991.66 732.4C994.36 732.4 994.36 705.5 997.05 705.5C999.74 705.5 999.74 732.4 1002.43 732.4C1005.13 732.4 1005.13 705.5 1007.82 705.5C1010.51 705.5 1010.51 732.4 1013.2 732.4C1015.9 732.4 1015.9 732.4 1018.59 732.4C1021.28 732.4 1021.28 624.8 1023.98 624.8C1026.67 624.8 1026.67 732.4 1029.36 732.4C1032.05 732.4 1032.05 732.4 1034.74 732.4C1037.44 732.4 1037.44 732.4 1040.13 732.4C1042.82 732.4 1042.82 705.5 1045.51 705.5C1048.21 705.5 1048.21 678.6 1050.9 678.6C1053.59 678.6 1053.59 732.4 1056.29 732.4C1058.98 732.4 1058.98 732.4 1061.67 732.4C1064.36 732.4 1064.36 732.4 1067.06 732.4C1069.75 732.4 1069.75 651.7 1072.44 651.7C1075.13 651.7 1075.13 705.5 1077.83 705.5C1080.52 705.5 1080.52 732.4 1083.21 732.4C1085.9 732.4 1085.9 678.6 1088.6 678.6C1091.29 678.6 1091.29 705.5 1093.98 705.5C1096.67 705.5 1096.67 732.4 1099.37 732.4C1102.06 732.4 1102.06 705.5 1104.75 705.5C1107.44 705.5 1107.44 732.4 1110.13 732.4C1112.83 732.4 1112.83 732.4 1115.52 732.4C1118.21 732.4 1118.21 732.4 1120.9 732.4C1123.6 732.4 1123.6 732.4 1126.29 732.4C1128.98 732.4 1128.98 705.5 1131.67 705.5C1134.37 705.5 1134.37 678.6 1137.06 678.6C1139.75 678.6 1139.75 624.8 1142.44 624.8C1145.14 624.8 1145.14 705.5 1147.83 705.5C1150.52 705.5 1150.52 705.5 1153.21 705.5C1155.91 705.5 1155.91 732.4 1158.6 732.4C1161.29 732.4 1161.29 678.6 1163.99 678.6C1166.68 678.6 1166.68 678.6 1169.37 678.6C1172.06 678.6 1172.06 678.6 1174.76 678.6C1177.45 678.6 1177.45 705.5 1180.14 705.5C1182.83 705.5 1182.83 571 1185.53 571C1188.22 571 1188.22 678.6 1190.91 678.6C1193.6 678.6 1193.6 651.7 1196.3 651.7C1198.99 651.7 1198.99 705.5 1201.68 705.5C1204.37 705.5 1204.37 705.5 1207.07 705.5C1209.76 705.5 1209.76 705.5 1212.45 705.5C1215.14 705.5 1215.14 624.8 1217.84 624.8C1220.53 624.8 1220.53 678.6 1223.22 678.6C1225.91 678.6 1225.91 732.4 1228.61 732.4C1231.3 732.4 1231.3 705.5 1233.99 705.5C1236.68 705.5 1236.68 732.4 1239.38 732.4C1242.07 732.4 1242.07 651.7 1244.76 651.7C1247.45 651.7 1247.45 705.5 1250.14 705.5C1252.84 705.5 1252.84 678.6 1255.53 678.6C1258.22 678.6 1258.22 705.5 1260.91 705.5C1263.61 705.5 1263.61 732.4 1266.3 732.4C1268.99 732.4 1268.99 678.6 1271.68 678.6C1274.38 678.6 1274.38 732.4 1277.07 732.4C1279.76 732.4 1279.76 732.4 1282.45 732.4C1285.15 732.4 1285.15 732.4 1287.84 732.4C1290.53 732.4 1290.53 624.8 1293.22 624.8C1295.92 624.8 1295.92 732.4 1298.61 732.4C1301.3 732.4 1301.3 732.4 1303.99 732.4C1306.69 732.4 1306.69 678.6 1309.38 678.6C1312.07 678.6 1312.07 705.5 1314.76 705.5" fill="none" stroke="#4fa8d5" stroke-width="2" stroke-linejoin="round"/></svg>
<div class="t" style="left:635.5px;width:400px;text-align:center;top:746.03px;font-size:10px;line-height:12px;font-weight:normal;color:#616161;">Sep 17</div>
<div class="t" style="left:689.35px;width:400px;text-align:center;top:746.03px;font-size:10px;line-height:12px;font-weight:normal;color:#616161;">Sep 27</div>
<div class="t" style="left:743.2px;width:400px;text-align:center;top:746.03px;font-size:10px;line-height:12px;font-weight:normal;color:#616161;">Oct 7</div>
<div class="t" style="left:797.05px;width:400px;text-align:center;top:746.03px;font-size:10px;line-height:12px;font-weight:normal;color:#616161;">Oct 17</div>
<div class="t" style="left:850.9px;width:400px;text-align:center;top:746.03px;font-size:10px;line-height:12px;font-weight:normal;color:#616161;">Oct 27</div>
<div class="t" style="left:904.75px;width:400px;text-align:center;top:746.03px;font-size:10px;line-height:12px;font-weight:normal;color:#616161;">Nov 6</div>
<div class="t" style="left:958.6px;width:400px;text-align:center;top:746.03px;font-size:10px;line-height:12px;font-weight:normal;color:#616161;">Nov 16</div>
<div class="t" style="left:1012.45px;width:400px;text-align:center;top:746.03px;font-size:10px;line-height:12px;font-weight:normal;color:#616161;">Nov 26</div>
<div class="t" style="left:1066.3px;width:400px;text-align:center;top:746.03px;font-size:10px;line-height:12px;font-weight:normal;color:#616161;">Dec 6</div>
<div class="abs" style="left:936px;top:784.3px;width:12px;height:2px;background:#4fa8d5;border-radius:1px"></div>
<div class="t" style="left:953.5px;top:779.43px;font-size:10px;line-height:12px;font-weight:normal;color:#616161;">Sep 17–Dec 15, 2024</div>
<div class="abs" style="left:1067px;top:784.3px;width:12px;height:0;border-top:2px dotted #9ccfe8"></div>
<div class="t" style="left:1084.5px;top:779.43px;font-size:10px;line-height:12px;font-weight:normal;color:#616161;">Jun 19–Sep 16, 2024</div>
<div class="t" style="left:1361.6px;top:505.5px;font-size:13px;line-height:16px;font-weight:bold;color:#303030;transform:scaleX(0.906);transform-origin:0 0;">Average order value</div>
<div class="abs" style="left:1361.6px;top:521px;width:114px;height:0;border-top:1px dotted #bdbdbd"></div>
<div class="t" style="left:1361.6px;top:529.64px;font-size:19.5px;line-height:24px;font-weight:bold;color:#303030;">$56.08</div>
<div class="t" style="left:1431px;top:537.53px;font-size:10px;line-height:12px;font-weight:bold;color:#4a4a4a;"><svg width="8" height="8" viewBox="0 0 8 8" style="position:relative;display:inline-block;vertical-align:0px;margin-right:2px"><path d="M1.5 1.5 L6 6 M6.2 2.5 V6.2 H2.5" fill="none" stroke="#4a4a4a" stroke-width="1.4"/></svg>15%</div>
<div class="t" style="left:1363px;top:564.19px;font-size:11px;line-height:14px;font-weight:normal;color:#616161;">$200</div>
<div class="t" style="left:1363px;top:604.19px;font-size:11px;line-height:14px;font-weight:normal;color:#616161;">$150</div>
<div class="t" style="left:1363px;top:644.69px;font-size:11px;line-height:14px;font-weight:normal;color:#616161;">$100</div>
<div class="t" style="left:1363px;top:684.79px;font-size:11px;line-height:14px;font-weight:normal;color:#616161;">$50</div>
<div class="t" style="left:1363px;top:725.59px;font-size:11px;line-height:14px;font-weight:normal;color:#616161;">$0</div>
<div class="abs" style="left:1408px;top:570.5px;width:461px;height:1px;background:#ececec"></div>
<div class="abs" style="left:1408px;top:610.5px;width:461px;height:1px;background:#ececec"></div>
<div class="abs" style="left:1408px;top:651px;width:461px;height:1px;background:#ececec"></div>
<div class="abs" style="left:1408px;top:691.1px;width:461px;height:1px;background:#ececec"></div>
<div class="abs" style="left:1408px;top:731.9px;width:461px;height:1px;background:#ececec"></div>
<svg style="left:0;top:0" width="1919" height="947"><path d="M1408 709.8C1410.59 709.8 1410.59 732.4 1413.18 732.4C1415.77 732.4 1415.77 732.4 1418.36 732.4C1420.95 732.4 1420.95 643.63 1423.53 643.63C1426.12 643.63 1426.12 732.4 1428.71 732.4C1431.3 732.4 1431.3 676.72 1433.89 676.72C1436.48 676.72 1436.48 732.4 1439.07 732.4C1441.66 732.4 1441.66 732.4 1444.25 732.4C1446.84 732.4 1446.84 732.4 1449.42 732.4C1452.01 732.4 1452.01 675.1 1454.6 675.1C1457.19 675.1 1457.19 732.4 1459.78 732.4C1462.37 732.4 1462.37 732.4 1464.96 732.4C1467.55 732.4 1467.55 732.4 1470.14 732.4C1472.72 732.4 1472.72 732.4 1475.31 732.4C1477.9 732.4 1477.9 732.4 1480.49 732.4C1483.08 732.4 1483.08 710.61 1485.67 710.61C1488.26 710.61 1488.26 732.4 1490.85 732.4C1493.44 732.4 1493.44 667.84 1496.03 667.84C1498.62 667.84 1498.62 732.4 1501.2 732.4C1503.79 732.4 1503.79 732.4 1506.38 732.4C1508.97 732.4 1508.97 732.4 1511.56 732.4C1514.15 732.4 1514.15 732.4 1516.74 732.4C1519.33 732.4 1519.33 732.4 1521.92 732.4C1524.51 732.4 1524.51 732.4 1527.09 732.4C1529.68 732.4 1529.68 732.4 1532.27 732.4C1534.86 732.4 1534.86 662.19 1537.45 662.19C1540.04 662.19 1540.04 679.94 1542.63 679.94C1545.22 679.94 1545.22 732.4 1547.81 732.4C1550.39 732.4 1550.39 673.49 1552.98 673.49C1555.57 673.49 1555.57 732.4 1558.16 732.4C1560.75 732.4 1560.75 723.52 1563.34 723.52C1565.93 723.52 1565.93 732.4 1568.52 732.4C1571.11 732.4 1571.11 658.16 1573.7 658.16C1576.28 658.16 1576.28 732.4 1578.87 732.4C1581.46 732.4 1581.46 732.4 1584.05 732.4C1586.64 732.4 1586.64 654.12 1589.23 654.12C1591.82 654.12 1591.82 732.4 1594.41 732.4C1597 732.4 1597 732.4 1599.59 732.4C1602.18 732.4 1602.18 732.4 1604.76 732.4C1607.35 732.4 1607.35 629.1 1609.94 629.1C1612.53 629.1 1612.53 672.68 1615.12 672.68C1617.71 672.68 1617.71 732.4 1620.3 732.4C1622.89 732.4 1622.89 732.4 1625.48 732.4C1628.07 732.4 1628.07 732.4 1630.65 732.4C1633.24 732.4 1633.24 674.3 1635.83 674.3C1638.42 674.3 1638.42 721.1 1641.01 721.1C1643.6 721.1 1643.6 732.4 1646.19 732.4C1648.78 732.4 1648.78 709 1651.37 709C1653.95 709 1653.95 701.73 1656.54 701.73C1659.13 701.73 1659.13 732.4 1661.72 732.4C1664.31 732.4 1664.31 666.23 1666.9 666.23C1669.49 666.23 1669.49 732.4 1672.08 732.4C1674.67 732.4 1674.67 732.4 1677.26 732.4C1679.84 732.4 1679.84 732.4 1682.43 732.4C1685.02 732.4 1685.02 732.4 1687.61 732.4C1690.2 732.4 1690.2 686.4 1692.79 686.4C1695.38 686.4 1695.38 702.54 1697.97 702.54C1700.56 702.54 1700.56 695.28 1703.15 695.28C1705.74 695.28 1705.74 670.26 1708.32 670.26C1710.91 670.26 1710.91 725.14 1713.5 725.14C1716.09 725.14 1716.09 732.4 1718.68 732.4C1721.27 732.4 1721.27 709 1723.86 709C1726.45 709 1726.45 711.42 1729.04 711.42C1731.62 711.42 1731.62 688.01 1734.21 688.01C1736.8 688.01 1736.8 673.49 1739.39 673.49C1741.98 673.49 1741.98 689.63 1744.57 689.63C1747.16 689.63 1747.16 683.98 1749.75 683.98C1752.34 683.98 1752.34 683.98 1754.93 683.98C1757.51 683.98 1757.51 662.19 1760.1 662.19C1762.69 662.19 1762.69 659.77 1765.28 659.77C1767.87 659.77 1767.87 658.16 1770.46 658.16C1773.05 658.16 1773.05 697.7 1775.64 697.7C1778.23 697.7 1778.23 690.44 1780.82 690.44C1783.4 690.44 1783.4 732.4 1785.99 732.4C1788.58 732.4 1788.58 672.68 1791.17 672.68C1793.76 672.68 1793.76 732.4 1796.35 732.4C1798.94 732.4 1798.94 693.66 1801.53 693.66C1804.12 693.66 1804.12 724.33 1806.71 724.33C1809.3 724.33 1809.3 721.1 1811.88 721.1C1814.47 721.1 1814.47 702.54 1817.06 702.54C1819.65 702.54 1819.65 732.4 1822.24 732.4C1824.83 732.4 1824.83 713.03 1827.42 713.03C1830.01 713.03 1830.01 732.4 1832.6 732.4C1835.18 732.4 1835.18 732.4 1837.77 732.4C1840.36 732.4 1840.36 732.4 1842.95 732.4C1845.54 732.4 1845.54 699.31 1848.13 699.31C1850.72 699.31 1850.72 732.4 1853.31 732.4C1855.9 732.4 1855.9 732.4 1858.49 732.4C1861.07 732.4 1861.07 659.77 1863.66 659.77C1866.25 659.77 1866.25 683.17 1868.84 683.17L1868.84 732.4C1866.25 732.4 1866.25 732.4 1863.66 732.4C1861.07 732.4 1861.07 732.4 1858.49 732.4C1855.9 732.4 1855.9 732.4 1853.31 732.4C1850.72 732.4 1850.72 732.4 1848.13 732.4C1845.54 732.4 1845.54 732.4 1842.95 732.4C1840.36 732.4 1840.36 732.4 1837.77 732.4C1835.18 732.4 1835.18 732.4 1832.6 732.4C1830.01 732.4 1830.01 675.1 1827.42 675.1C1824.83 675.1 1824.83 732.4 1822.24 732.4C1819.65 732.4 1819.65 675.1 1817.06 675.1C1814.47 675.1 1814.47 732.4 1811.88 732.4C1809.3 732.4 1809.3 732.4 1806.71 732.4C1804.12 732.4 1804.12 711.42 1801.53 711.42C1798.94 711.42 1798.94 732.4 1796.35 732.4C1793.76 732.4 1793.76 664.61 1791.17 664.61C1788.58 664.61 1788.58 732.4 1785.99 732.4C1783.4 732.4 1783.4 732.4 1780.82 732.4C1778.23 732.4 1778.23 732.4 1775.64 732.4C1773.05 732.4 1773.05 732.4 1770.46 732.4C1767.87 732.4 1767.87 732.4 1765.28 732.4C1762.69 732.4 1762.69 732.4 1760.1 732.4C1757.51 732.4 1757.51 732.4 1754.93 732.4C1752.34 732.4 1752.34 732.4 1749.75 732.4C1747.16 732.4 1747.16 696.89 1744.57 696.89C1741.98 696.89 1741.98 631.52 1739.39 631.52C1736.8 631.52 1736.8 691.24 1734.21 691.24C1731.62 691.24 1731.62 732.4 1729.04 732.4C1726.45 732.4 1726.45 732.4 1723.86 732.4C1721.27 732.4 1721.27 732.4 1718.68 732.4C1716.09 732.4 1716.09 716.26 1713.5 716.26C1710.91 716.26 1710.91 732.4 1708.32 732.4C1705.74 732.4 1705.74 700.93 1703.15 700.93C1700.56 700.93 1700.56 732.4 1697.97 732.4C1695.38 732.4 1695.38 653.31 1692.79 653.31C1690.2 653.31 1690.2 732.4 1687.61 732.4C1685.02 732.4 1685.02 732.4 1682.43 732.4C1679.84 732.4 1679.84 732.4 1677.26 732.4C1674.67 732.4 1674.67 732.4 1672.08 732.4C1669.49 732.4 1669.49 732.4 1666.9 732.4C1664.31 732.4 1664.31 732.4 1661.72 732.4C1659.13 732.4 1659.13 704.15 1656.54 704.15C1653.95 704.15 1653.95 732.4 1651.37 732.4C1648.78 732.4 1648.78 732.4 1646.19 732.4C1643.6 732.4 1643.6 732.4 1641.01 732.4C1638.42 732.4 1638.42 732.4 1635.83 732.4C1633.24 732.4 1633.24 732.4 1630.65 732.4C1628.07 732.4 1628.07 675.1 1625.48 675.1C1622.89 675.1 1622.89 732.4 1620.3 732.4C1617.71 732.4 1617.71 732.4 1615.12 732.4C1612.53 732.4 1612.53 732.4 1609.94 732.4C1607.35 732.4 1607.35 732.4 1604.76 732.4C1602.18 732.4 1602.18 732.4 1599.59 732.4C1597 732.4 1597 732.4 1594.41 732.4C1591.82 732.4 1591.82 732.4 1589.23 732.4C1586.64 732.4 1586.64 702.54 1584.05 702.54C1581.46 702.54 1581.46 732.4 1578.87 732.4C1576.28 732.4 1576.28 732.4 1573.7 732.4C1571.11 732.4 1571.11 732.4 1568.52 732.4C1565.93 732.4 1565.93 732.4 1563.34 732.4C1560.75 732.4 1560.75 732.4 1558.16 732.4C1555.57 732.4 1555.57 732.4 1552.98 732.4C1550.39 732.4 1550.39 732.4 1547.81 732.4C1545.22 732.4 1545.22 732.4 1542.63 732.4C1540.04 732.4 1540.04 732.4 1537.45 732.4C1534.86 732.4 1534.86 732.4 1532.27 732.4C1529.68 732.4 1529.68 732.4 1527.09 732.4C1524.51 732.4 1524.51 673.49 1521.92 673.49C1519.33 673.49 1519.33 732.4 1516.74 732.4C1514.15 732.4 1514.15 732.4 1511.56 732.4C1508.97 732.4 1508.97 732.4 1506.38 732.4C1503.79 732.4 1503.79 609.74 1501.2 609.74C1498.62 609.74 1498.62 700.12 1496.03 700.12C1493.44 700.12 1493.44 691.24 1490.85 691.24C1488.26 691.24 1488.26 732.4 1485.67 732.4C1483.08 732.4 1483.08 732.4 1480.49 732.4C1477.9 732.4 1477.9 732.4 1475.31 732.4C1472.72 732.4 1472.72 675.91 1470.14 675.91C1467.55 675.91 1467.55 732.4 1464.96 732.4C1462.37 732.4 1462.37 732.4 1459.78 732.4C1457.19 732.4 1457.19 732.4 1454.6 732.4C1452.01 732.4 1452.01 677.52 1449.42 677.52C1446.84 677.52 1446.84 732.4 1444.25 732.4C1441.66 732.4 1441.66 652.51 1439.07 652.51C1436.48 652.51 1436.48 732.4 1433.89 732.4C1431.3 732.4 1431.3 732.4 1428.71 732.4C1426.12 732.4 1426.12 676.72 1423.53 676.72C1420.95 676.72 1420.95 732.4 1418.36 732.4C1415.77 732.4 1415.77 732.4 1413.18 732.4C1410.59 732.4 1410.59 732.4 1408 732.4Z" fill="rgba(79,168,213,0.045)" stroke="none"/><path d="M1408 732.4C1410.59 732.4 1410.59 732.4 1413.18 732.4C1415.77 732.4 1415.77 732.4 1418.36 732.4C1420.95 732.4 1420.95 676.72 1423.53 676.72C1426.12 676.72 1426.12 732.4 1428.71 732.4C1431.3 732.4 1431.3 732.4 1433.89 732.4C1436.48 732.4 1436.48 652.51 1439.07 652.51C1441.66 652.51 1441.66 732.4 1444.25 732.4C1446.84 732.4 1446.84 677.52 1449.42 677.52C1452.01 677.52 1452.01 732.4 1454.6 732.4C1457.19 732.4 1457.19 732.4 1459.78 732.4C1462.37 732.4 1462.37 732.4 1464.96 732.4C1467.55 732.4 1467.55 675.91 1470.14 675.91C1472.72 675.91 1472.72 732.4 1475.31 732.4C1477.9 732.4 1477.9 732.4 1480.49 732.4C1483.08 732.4 1483.08 732.4 1485.67 732.4C1488.26 732.4 1488.26 691.24 1490.85 691.24C1493.44 691.24 1493.44 700.12 1496.03 700.12C1498.62 700.12 1498.62 609.74 1501.2 609.74C1503.79 609.74 1503.79 732.4 1506.38 732.4C1508.97 732.4 1508.97 732.4 1511.56 732.4C1514.15 732.4 1514.15 732.4 1516.74 732.4C1519.33 732.4 1519.33 673.49 1521.92 673.49C1524.51 673.49 1524.51 732.4 1527.09 732.4C1529.68 732.4 1529.68 732.4 1532.27 732.4C1534.86 732.4 1534.86 732.4 1537.45 732.4C1540.04 732.4 1540.04 732.4 1542.63 732.4C1545.22 732.4 1545.22 732.4 1547.81 732.4C1550.39 732.4 1550.39 732.4 1552.98 732.4C1555.57 732.4 1555.57 732.4 1558.16 732.4C1560.75 732.4 1560.75 732.4 1563.34 732.4C1565.93 732.4 1565.93 732.4 1568.52 732.4C1571.11 732.4 1571.11 732.4 1573.7 732.4C1576.28 732.4 1576.28 732.4 1578.87 732.4C1581.46 732.4 1581.46 702.54 1584.05 702.54C1586.64 702.54 1586.64 732.4 1589.23 732.4C1591.82 732.4 1591.82 732.4 1594.41 732.4C1597 732.4 1597 732.4 1599.59 732.4C1602.18 732.4 1602.18 732.4 1604.76 732.4C1607.35 732.4 1607.35 732.4 1609.94 732.4C1612.53 732.4 1612.53 732.4 1615.12 732.4C1617.71 732.4 1617.71 732.4 1620.3 732.4C1622.89 732.4 1622.89 675.1 1625.48 675.1C1628.07 675.1 1628.07 732.4 1630.65 732.4C1633.24 732.4 1633.24 732.4 1635.83 732.4C1638.42 732.4 1638.42 732.4 1641.01 732.4C1643.6 732.4 1643.6 732.4 1646.19 732.4C1648.78 732.4 1648.78 732.4 1651.37 732.4C1653.95 732.4 1653.95 704.15 1656.54 704.15C1659.13 704.15 1659.13 732.4 1661.72 732.4C1664.31 732.4 1664.31 732.4 1666.9 732.4C1669.49 732.4 1669.49 732.4 1672.08 732.4C1674.67 732.4 1674.67 732.4 1677.26 732.4C1679.84 732.4 1679.84 732.4 1682.43 732.4C1685.02 732.4 1685.02 732.4 1687.61 732.4C1690.2 732.4 1690.2 653.31 1692.79 653.31C1695.38 653.31 1695.38 732.4 1697.97 732.4C1700.56 732.4 1700.56 700.93 1703.15 700.93C1705.74 700.93 1705.74 732.4 1708.32 732.4C1710.91 732.4 1710.91 716.26 1713.5 716.26C1716.09 716.26 1716.09 732.4 1718.68 732.4C1721.27 732.4 1721.27 732.4 1723.86 732.4C1726.45 732.4 1726.45 732.4 1729.04 732.4C1731.62 732.4 1731.62 691.24 1734.21 691.24C1736.8 691.24 1736.8 631.52 1739.39 631.52C1741.98 631.52 1741.98 696.89 1744.57 696.89C1747.16 696.89 1747.16 732.4 1749.75 732.4C1752.34 732.4 1752.34 732.4 1754.93 732.4C1757.51 732.4 1757.51 732.4 1760.1 732.4C1762.69 732.4 1762.69 732.4 1765.28 732.4C1767.87 732.4 1767.87 732.4 1770.46 732.4C1773.05 732.4 1773.05 732.4 1775.64 732.4C1778.23 732.4 1778.23 732.4 1780.82 732.4C1783.4 732.4 1783.4 732.4 1785.99 732.4C1788.58 732.4 1788.58 664.61 1791.17 664.61C1793.76 664.61 1793.76 732.4 1796.35 732.4C1798.94 732.4 1798.94 711.42 1801.53 711.42C1804.12 711.42 1804.12 732.4 1806.71 732.4C1809.3 732.4 1809.3 732.4 1811.88 732.4C1814.47 732.4 1814.47 675.1 1817.06 675.1C1819.65 675.1 1819.65 732.4 1822.24 732.4C1824.83 732.4 1824.83 675.1 1827.42 675.1C1830.01 675.1 1830.01 732.4 1832.6 732.4C1835.18 732.4 1835.18 732.4 1837.77 732.4C1840.36 732.4 1840.36 732.4 1842.95 732.4C1845.54 732.4 1845.54 732.4 1848.13 732.4C1850.72 732.4 1850.72 732.4 1853.31 732.4C1855.9 732.4 1855.9 732.4 1858.49 732.4C1861.07 732.4 1861.07 732.4 1863.66 732.4C1866.25 732.4 1866.25 732.4 1868.84 732.4" fill="none" stroke="#86b6cf" stroke-width="1.7" stroke-dasharray="0.01 3.6" stroke-linecap="round"/><path d="M1408 709.8C1410.59 709.8 1410.59 732.4 1413.18 732.4C1415.77 732.4 1415.77 732.4 1418.36 732.4C1420.95 732.4 1420.95 643.63 1423.53 643.63C1426.12 643.63 1426.12 732.4 1428.71 732.4C1431.3 732.4 1431.3 676.72 1433.89 676.72C1436.48 676.72 1436.48 732.4 1439.07 732.4C1441.66 732.4 1441.66 732.4 1444.25 732.4C1446.84 732.4 1446.84 732.4 1449.42 732.4C1452.01 732.4 1452.01 675.1 1454.6 675.1C1457.19 675.1 1457.19 732.4 1459.78 732.4C1462.37 732.4 1462.37 732.4 1464.96 732.4C1467.55 732.4 1467.55 732.4 1470.14 732.4C1472.72 732.4 1472.72 732.4 1475.31 732.4C1477.9 732.4 1477.9 732.4 1480.49 732.4C1483.08 732.4 1483.08 710.61 1485.67 710.61C1488.26 710.61 1488.26 732.4 1490.85 732.4C1493.44 732.4 1493.44 667.84 1496.03 667.84C1498.62 667.84 1498.62 732.4 1501.2 732.4C1503.79 732.4 1503.79 732.4 1506.38 732.4C1508.97 732.4 1508.97 732.4 1511.56 732.4C1514.15 732.4 1514.15 732.4 1516.74 732.4C1519.33 732.4 1519.33 732.4 1521.92 732.4C1524.51 732.4 1524.51 732.4 1527.09 732.4C1529.68 732.4 1529.68 732.4 1532.27 732.4C1534.86 732.4 1534.86 662.19 1537.45 662.19C1540.04 662.19 1540.04 679.94 1542.63 679.94C1545.22 679.94 1545.22 732.4 1547.81 732.4C1550.39 732.4 1550.39 673.49 1552.98 673.49C1555.57 673.49 1555.57 732.4 1558.16 732.4C1560.75 732.4 1560.75 723.52 1563.34 723.52C1565.93 723.52 1565.93 732.4 1568.52 732.4C1571.11 732.4 1571.11 658.16 1573.7 658.16C1576.28 658.16 1576.28 732.4 1578.87 732.4C1581.46 732.4 1581.46 732.4 1584.05 732.4C1586.64 732.4 1586.64 654.12 1589.23 654.12C1591.82 654.12 1591.82 732.4 1594.41 732.4C1597 732.4 1597 732.4 1599.59 732.4C1602.18 732.4 1602.18 732.4 1604.76 732.4C1607.35 732.4 1607.35 629.1 1609.94 629.1C1612.53 629.1 1612.53 672.68 1615.12 672.68C1617.71 672.68 1617.71 732.4 1620.3 732.4C1622.89 732.4 1622.89 732.4 1625.48 732.4C1628.07 732.4 1628.07 732.4 1630.65 732.4C1633.24 732.4 1633.24 674.3 1635.83 674.3C1638.42 674.3 1638.42 721.1 1641.01 721.1C1643.6 721.1 1643.6 732.4 1646.19 732.4C1648.78 732.4 1648.78 709 1651.37 709C1653.95 709 1653.95 701.73 1656.54 701.73C1659.13 701.73 1659.13 732.4 1661.72 732.4C1664.31 732.4 1664.31 666.23 1666.9 666.23C1669.49 666.23 1669.49 732.4 1672.08 732.4C1674.67 732.4 1674.67 732.4 1677.26 732.4C1679.84 732.4 1679.84 732.4 1682.43 732.4C1685.02 732.4 1685.02 732.4 1687.61 732.4C1690.2 732.4 1690.2 686.4 1692.79 686.4C1695.38 686.4 1695.38 702.54 1697.97 702.54C1700.56 702.54 1700.56 695.28 1703.15 695.28C1705.74 695.28 1705.74 670.26 1708.32 670.26C1710.91 670.26 1710.91 725.14 1713.5 725.14C1716.09 725.14 1716.09 732.4 1718.68 732.4C1721.27 732.4 1721.27 709 1723.86 709C1726.45 709 1726.45 711.42 1729.04 711.42C1731.62 711.42 1731.62 688.01 1734.21 688.01C1736.8 688.01 1736.8 673.49 1739.39 673.49C1741.98 673.49 1741.98 689.63 1744.57 689.63C1747.16 689.63 1747.16 683.98 1749.75 683.98C1752.34 683.98 1752.34 683.98 1754.93 683.98C1757.51 683.98 1757.51 662.19 1760.1 662.19C1762.69 662.19 1762.69 659.77 1765.28 659.77C1767.87 659.77 1767.87 658.16 1770.46 658.16C1773.05 658.16 1773.05 697.7 1775.64 697.7C1778.23 697.7 1778.23 690.44 1780.82 690.44C1783.4 690.44 1783.4 732.4 1785.99 732.4C1788.58 732.4 1788.58 672.68 1791.17 672.68C1793.76 672.68 1793.76 732.4 1796.35 732.4C1798.94 732.4 1798.94 693.66 1801.53 693.66C1804.12 693.66 1804.12 724.33 1806.71 724.33C1809.3 724.33 1809.3 721.1 1811.88 721.1C1814.47 721.1 1814.47 702.54 1817.06 702.54C1819.65 702.54 1819.65 732.4 1822.24 732.4C1824.83 732.4 1824.83 713.03 1827.42 713.03C1830.01 713.03 1830.01 732.4 1832.6 732.4C1835.18 732.4 1835.18 732.4 1837.77 732.4C1840.36 732.4 1840.36 732.4 1842.95 732.4C1845.54 732.4 1845.54 699.31 1848.13 699.31C1850.72 699.31 1850.72 732.4 1853.31 732.4C1855.9 732.4 1855.9 732.4 1858.49 732.4C1861.07 732.4 1861.07 659.77 1863.66 659.77C1866.25 659.77 1866.25 683.17 1868.84 683.17" fill="none" stroke="#4fa8d5" stroke-width="2" stroke-linejoin="round"/></svg>
<div class="t" style="left:1208px;width:400px;text-align:center;top:746.03px;font-size:10px;line-height:12px;font-weight:normal;color:#616161;">Sep 17</div>
<div class="t" style="left:1259.78px;width:400px;text-align:center;top:746.03px;font-size:10px;line-height:12px;font-weight:normal;color:#616161;">Sep 27</div>
<div class="t" style="left:1311.56px;width:400px;text-align:center;top:746.03px;font-size:10px;line-height:12px;font-weight:normal;color:#616161;">Oct 7</div>
<div class="t" style="left:1363.34px;width:400px;text-align:center;top:746.03px;font-size:10px;line-height:12px;font-weight:normal;color:#616161;">Oct 17</div>
<div class="t" style="left:1415.12px;width:400px;text-align:center;top:746.03px;font-size:10px;line-height:12px;font-weight:normal;color:#616161;">Oct 27</div>
<div class="t" style="left:1466.9px;width:400px;text-align:center;top:746.03px;font-size:10px;line-height:12px;font-weight:normal;color:#616161;">Nov 6</div>
<div class="t" style="left:1518.68px;width:400px;text-align:center;top:746.03px;font-size:10px;line-height:12px;font-weight:normal;color:#616161;">Nov 16</div>
<div class="t" style="left:1570.46px;width:400px;text-align:center;top:746.03px;font-size:10px;line-height:12px;font-weight:normal;color:#616161;">Nov 26</div>
<div class="t" style="left:1622.24px;width:400px;text-align:center;top:746.03px;font-size:10px;line-height:12px;font-weight:normal;color:#616161;">Dec 6</div>
<div class="abs" style="left:1491px;top:784.3px;width:12px;height:2px;background:#4fa8d5;border-radius:1px"></div>
<div class="t" style="left:1508.5px;top:779.43px;font-size:10px;line-height:12px;font-weight:normal;color:#616161;">Sep 17–Dec 15, 2024</div>
<div class="abs" style="left:1621.5px;top:784.3px;width:12px;height:0;border-top:2px dotted #9ccfe8"></div>
<div class="t" style="left:1639px;top:779.43px;font-size:10px;line-height:12px;font-weight:normal;color:#616161;">Jun 19–Sep 16, 2024</div>
<div class="t" style="left:252.2px;top:839px;font-size:13px;line-height:16px;font-weight:bold;color:#303030;transform:scaleX(0.906);transform-origin:0 0;">Top selling products</div>
<div class="abs" style="left:252.2px;top:854.5px;width:115px;height:0;border-top:1px dotted #bdbdbd"></div>
<div class="t" style="left:252px;top:874.36px;font-size:10.5px;line-height:13px;font-weight:normal;color:#616161;">Purple Leaf Tea</div>
<div class="abs" style="left:252px;top:889.5px;width:424.5px;height:9.5px;border-radius:0 3px 3px 0;background:linear-gradient(90deg,#3698da,#55b7eb)"></div>
<div class="t" style="left:685.5px;top:887.69px;font-size:11px;line-height:14px;font-weight:normal;color:#616161;">21</div>
<div class="t" style="left:705px;top:888.36px;font-size:10.5px;line-height:13px;font-weight:bold;color:#29845a;"><svg width="8" height="8" viewBox="0 0 8 8" style="position:relative;display:inline-block;vertical-align:0px;margin-right:2px"><path d="M1.5 6.5 L6 2 M2.5 1.8 H6.2 V5.5" fill="none" stroke="#29845a" stroke-width="1.4"/></svg>2K%</div>
<div class="abs" style="left:252px;top:901.5px;width:19.5px;height:9.5px;border-radius:0 2px 2px 0;background:#90c8e8"></div>
<div class="t" style="left:281.5px;top:899.69px;font-size:11px;line-height:14px;font-weight:normal;color:#616161;">1</div>
<div class="t" style="left:252px;top:927.86px;font-size:10.5px;line-height:13px;font-weight:normal;color:#616161;">White Prakash</div>
<div class="abs" style="left:252px;top:943px;width:424px;height:9.5px;border-radius:0 3px 3px 0;background:linear-gradient(90deg,#3698da,#55b7eb)"></div>
<div class="t" style="left:807px;top:839px;font-size:13px;line-height:16px;font-weight:bold;color:#303030;transform:scaleX(0.906);transform-origin:0 0;">Customer cohort analysis</div>
<div class="abs" style="left:807px;top:854.5px;width:145px;height:0;border-top:1px dotted #bdbdbd"></div>
<div class="t" style="left:628.19px;width:400px;text-align:center;top:874.19px;font-size:11px;line-height:14px;font-weight:normal;color:#616161;">0</div>
<div class="t" style="left:670.77px;width:400px;text-align:center;top:874.19px;font-size:11px;line-height:14px;font-weight:normal;color:#616161;">1</div>
<div class="t" style="left:713.35px;width:400px;text-align:center;top:874.19px;font-size:11px;line-height:14px;font-weight:normal;color:#616161;">2</div>
<div class="t" style="left:755.93px;width:400px;text-align:center;top:874.19px;font-size:11px;line-height:14px;font-weight:normal;color:#616161;">3</div>
<div class="t" style="left:798.51px;width:400px;text-align:center;top:874.19px;font-size:11px;line-height:14px;font-weight:normal;color:#616161;">4</div>
<div class="t" style="left:841.09px;width:400px;text-align:center;top:874.19px;font-size:11px;line-height:14px;font-weight:normal;color:#616161;">5</div>
<div class="t" style="left:883.67px;width:400px;text-align:center;top:874.19px;font-size:11px;line-height:14px;font-weight:normal;color:#616161;">6</div>
<div class="t" style="left:926.25px;width:400px;text-align:center;top:874.19px;font-size:11px;line-height:14px;font-weight:normal;color:#616161;">7</div>
<div class="t" style="left:968.83px;width:400px;text-align:center;top:874.19px;font-size:11px;line-height:14px;font-weight:normal;color:#616161;">8</div>
<div class="t" style="left:1011.41px;width:400px;text-align:center;top:874.19px;font-size:11px;line-height:14px;font-weight:normal;color:#616161;">9</div>
<div class="t" style="left:1053.99px;width:400px;text-align:center;top:874.19px;font-size:11px;line-height:14px;font-weight:normal;color:#616161;">10</div>
<div class="t" style="left:1096.57px;width:400px;text-align:center;top:874.19px;font-size:11px;line-height:14px;font-weight:normal;color:#616161;">11</div>
<div class="abs" style="left:806.9px;top:893px;width:42.88px;height:16.6px;background:#cdd2f5"></div>
<div class="abs" style="left:849.48px;top:893px;width:42.88px;height:16.6px;background:#f8f9fd"></div>
<div class="abs" style="left:892.06px;top:893px;width:42.88px;height:16.6px;background:#f8f9fd"></div>
<div class="abs" style="left:934.64px;top:893px;width:42.88px;height:16.6px;background:#3631a8"></div>
<div class="abs" style="left:977.22px;top:893px;width:42.88px;height:16.6px;background:#f8f9fd"></div>
<div class="abs" style="left:1019.8px;top:893px;width:42.88px;height:16.6px;background:#f8f9fd"></div>
<div class="abs" style="left:1062.38px;top:893px;width:42.88px;height:16.6px;background:#5b5ee0"></div>
<div class="abs" style="left:1104.96px;top:893px;width:42.88px;height:16.6px;background:#f8f9fd"></div>
<div class="abs" style="left:1147.54px;top:893px;width:42.88px;height:16.6px;background:#f8f9fd"></div>
<div class="abs" style="left:1190.12px;top:893px;width:42.88px;height:16.6px;background:#5b5ee0"></div>
<div class="abs" style="left:1232.7px;top:893px;width:42.88px;height:16.6px;background:#cdd2f5"></div>
<div class="abs" style="left:1275.28px;top:893px;width:42.88px;height:16.6px;background:#cdd2f5"></div>
<div class="abs" style="left:806.9px;top:909.2px;width:42.88px;height:16.6px;background:#5b5ee0"></div>
<div class="abs" style="left:849.48px;top:909.2px;width:42.88px;height:16.6px;background:#f8f9fd"></div>
<div class="abs" style="left:892.06px;top:909.2px;width:42.88px;height:16.6px;background:#f8f9fd"></div>
<div class="abs" style="left:934.64px;top:909.2px;width:42.88px;height:16.6px;background:#b2baf0"></div>
<div class="abs" style="left:977.22px;top:909.2px;width:42.88px;height:16.6px;background:#f8f9fd"></div>
<div class="abs" style="left:1019.8px;top:909.2px;width:42.88px;height:16.6px;background:#f8f9fd"></div>
<div class="abs" style="left:1062.38px;top:909.2px;width:42.88px;height:16.6px;background:#f8f9fd"></div>
<div class="abs" style="left:1104.96px;top:909.2px;width:42.88px;height:16.6px;background:#f8f9fd"></div>
<div class="abs" style="left:1147.54px;top:909.2px;width:42.88px;height:16.6px;background:#f8f9fd"></div>
<div class="abs" style="left:1190.12px;top:909.2px;width:42.88px;height:16.6px;background:#e4e6f8"></div>
<div class="abs" style="left:1232.7px;top:909.2px;width:42.88px;height:16.6px;background:#e4e6f8"></div>
<div class="abs" style="left:806.9px;top:926px;width:42.88px;height:16.6px;background:#f8f9fd"></div>
<div class="abs" style="left:849.48px;top:926px;width:42.88px;height:16.6px;background:#e4e6f8"></div>
<div class="abs" style="left:892.06px;top:926px;width:42.88px;height:16.6px;background:#f8f9fd"></div>
<div class="abs" style="left:934.64px;top:926px;width:42.88px;height:16.6px;background:#f8f9fd"></div>
<div class="abs" style="left:977.22px;top:926px;width:42.88px;height:16.6px;background:#e4e6f8"></div>
<div class="abs" style="left:1019.8px;top:926px;width:42.88px;height:16.6px;background:#f8f9fd"></div>
<div class="abs" style="left:1062.38px;top:926px;width:42.88px;height:16.6px;background:#e4e6f8"></div>
<div class="abs" style="left:1104.96px;top:926px;width:42.88px;height:16.6px;background:#f8f9fd"></div>
<div class="abs" style="left:1147.54px;top:926px;width:42.88px;height:16.6px;background:#e4e6f8"></div>
<div class="abs" style="left:1190.12px;top:926px;width:42.88px;height:16.6px;background:#f8f9fd"></div>
<div class="abs" style="left:806.9px;top:942.6px;width:42.88px;height:16.6px;background:#f8f9fd"></div>
<div class="abs" style="left:849.48px;top:942.6px;width:42.88px;height:16.6px;background:#f8f9fd"></div>
<div class="abs" style="left:892.06px;top:942.6px;width:42.88px;height:16.6px;background:#e4e6f8"></div>
<div class="abs" style="left:934.64px;top:942.6px;width:42.88px;height:16.6px;background:#3631a8"></div>
<div class="abs" style="left:977.22px;top:942.6px;width:42.88px;height:16.6px;background:#f8f9fd"></div>
<div class="abs" style="left:1019.8px;top:942.6px;width:42.88px;height:16.6px;background:#e4e6f8"></div>
<div class="abs" style="left:1062.38px;top:942.6px;width:42.88px;height:16.6px;background:#f8f9fd"></div>
<div class="abs" style="left:1104.96px;top:942.6px;width:42.88px;height:16.6px;background:#f8f9fd"></div>
<div class="abs" style="left:1147.54px;top:942.6px;width:42.88px;height:16.6px;background:#e4e6f8"></div>
<div class="abs" style="left:1190.12px;top:942.6px;width:42.88px;height:16.6px;background:#f8f9fd"></div>
<div class="t" style="left:1361.6px;top:839px;font-size:13px;line-height:16px;font-weight:bold;color:#303030;transform:scaleX(0.906);transform-origin:0 0;">Returning customer rate</div>
<div class="abs" style="left:1361.6px;top:854.5px;width:138px;height:0;border-top:1px dotted #bdbdbd"></div>
<div class="t" style="left:1361.6px;top:862.04px;font-size:19.5px;line-height:24px;font-weight:bold;color:#303030;">35.53%</div>
<div class="t" style="left:1434px;top:870.03px;font-size:10px;line-height:12px;font-weight:bold;color:#4a4a4a;"><svg width="8" height="8" viewBox="0 0 8 8" style="position:relative;display:inline-block;vertical-align:0px;margin-right:2px"><path d="M1.5 1.5 L6 6 M6.2 2.5 V6.2 H2.5" fill="none" stroke="#4a4a4a" stroke-width="1.4"/></svg>46%</div>
<div class="t" style="left:1363.5px;top:896.59px;font-size:11px;line-height:14px;font-weight:normal;color:#616161;">6</div>
<div class="abs" style="left:1390px;top:903.8px;width:479.5px;height:1px;background:#ececec"></div>
<div class="abs" style="left:1737px;top:931px;width:2px;height:14px;background:#4fa8d5"></div>
<div class="abs" style="left:1741px;top:931px;width:2px;height:14px;background:#4fa8d5"></div>
<div class="abs" style="left:1554px;top:843px;width:208px;height:88px;background:#f9f9f9;border-radius:8px;box-shadow:0 0 0 1px rgba(0,0,0,0.06),0 4px 10px rgba(0,0,0,0.16)"></div>
<div class="abs" style="left:1679px;top:848px;width:37px;height:38px;background:#fdfdfd;border-radius:4px;box-shadow:0 0 1px rgba(0,0,0,0.06)"></div>
<svg style="left:1569px;top:858px" width="19" height="18" viewBox="0 0 19 18">
<path d="M8.5 0.8 C13 0.8 16.2 3.5 16.2 8 C16.2 12.6 13 16.4 8.5 16.4 C4 16.4 0.9 12.6 0.9 8 C0.9 3.5 4 0.8 8.5 0.8 Z" fill="#5aa52a"/>
<path d="M5 8.6 L7.3 10.8 L11.6 6.3" fill="none" stroke="#fff" stroke-width="1.6"/>
<circle cx="13.8" cy="13.6" r="3" fill="#fff"/><circle cx="13.8" cy="13.6" r="2.2" fill="#d9262e"/></svg>
<svg style="left:1609px;top:858px" width="19" height="17" viewBox="0 0 19 17">
<defs><linearGradient id="vg" x1="0" y1="0" x2="1" y2="1"><stop offset="0" stop-color="#8a8a94"/><stop offset="1" stop-color="#3c3c48"/></linearGradient></defs>
<path d="M0.5 4.5 H11 L6.5 15.5 Z" fill="url(#vg)"/>
<circle cx="13" cy="5" r="4.6" fill="#fff"/><circle cx="13" cy="5" r="3.9" fill="#d13c52"/>
<path d="M11.5 3.5 L14.5 6.5 M14.5 3.5 L11.5 6.5" stroke="#fff" stroke-width="1"/></svg>
<svg style="left:1649px;top:859px" width="17" height="17" viewBox="0 0 17 17">
<g fill="none" stroke="#5e5e5e" stroke-width="0.95">
<rect x="8.7" y="1.2" width="3.2" height="7.2" rx="1.6"/><rect x="1.1" y="5" width="7.3" height="3.2" rx="1.6"/>
<rect x="5.1" y="8.7" width="3.2" height="7.2" rx="1.6"/><rect x="8.7" y="8.8" width="7.2" height="3.2" rx="1.6"/>
<path d="M8.4 5 V2.8 A1.65 1.65 0 0 0 5.1 2.8 V5 Z"/><path d="M5 8.8 H2.7 A1.6 1.6 0 0 0 2.7 12 H5 Z"/>
<path d="M8.7 12.2 V14.3 A1.6 1.6 0 0 0 11.9 14.3 V12.2 Z"/><path d="M12.2 8.3 H14.3 A1.6 1.6 0 0 0 14.3 5 H12.2 Z"/>
</g></svg>
<svg style="left:1689px;top:858px" width="18" height="18" viewBox="0 0 18 18">
<path d="M16.5 0.8 C11 2 5 6 1.5 16.5 C6.5 13 12.5 9.5 16.5 0.8 Z" fill="#9b6ad2"/>
<path d="M16.5 0.8 C10 5 5 10 1.5 16.5" fill="none" stroke="#c7a7ef" stroke-width="0.7"/></svg>
<svg style="left:1731px;top:858px" width="14" height="17" viewBox="0 0 14 17">
<path d="M1 4.5 C1 2 3.5 0.6 7 0.6 C10.5 0.6 13 2 13 4.5 L12 5.5 V15 C12 16 11.3 16.5 10.5 16.5 H3.5 C2.7 16.5 2 16 2 15 V5.5 Z" fill="#262626"/>
<path d="M2.5 3.4 C4.8 2.2 9.2 2.2 11.5 3.4" fill="none" stroke="#8a8a8a" stroke-width="0.8"/>
<path d="M5 8 V14 M9 8 V14 M5 11 H9" stroke="#bbb" stroke-width="1"/></svg>
<svg style="left:1570px;top:898px" width="18" height="18" viewBox="0 0 18 18">
<path d="M7.5 0.8 C9.5 2.2 11.8 2.8 14 2.8 V8.5 C14 12.5 11.2 15.2 7.5 16.5 C3.8 15.2 1 12.5 1 8.5 V2.8 C3.2 2.8 5.5 2.2 7.5 0.8 Z" fill="#1f7fd4"/>
<path d="M7.5 0.8 C9.5 2.2 11.8 2.8 14 2.8 V8.5 H7.5 Z M1 8.5 H7.5 V16.5 C3.8 15.2 1 12.5 1 8.5 Z" fill="#46b2ee"/>
<path d="M12 7.8 L17.6 17.4 H6.4 Z" fill="#f7c948" stroke="#fff" stroke-width="0.8"/>
<path d="M12 11 V14.2 M12 15.4 V16.2" stroke="#222" stroke-width="1.2"/></svg>
<div class="abs" style="left:1909px;top:49px;width:10px;height:895px;background:#f1f1f1;border-top-right-radius:10px"></div>
<div class="abs" style="left:1910.5px;top:60px;width:7.5px;height:277px;background:#a8a8a8"></div>
<svg style="left:1910px;top:50px" width="8" height="6" viewBox="0 0 8 6"><path d="M0.5 5 L4 1 L7.5 5 Z" fill="#a3a3a3"/></svg>
<svg style="left:1910px;top:935px" width="8" height="6" viewBox="0 0 8 6"><path d="M0.5 1 L4 5 L7.5 1 Z" fill="#a3a3a3"/></svg>
</div>
<div id="taskbar"></div>
</body></html>
